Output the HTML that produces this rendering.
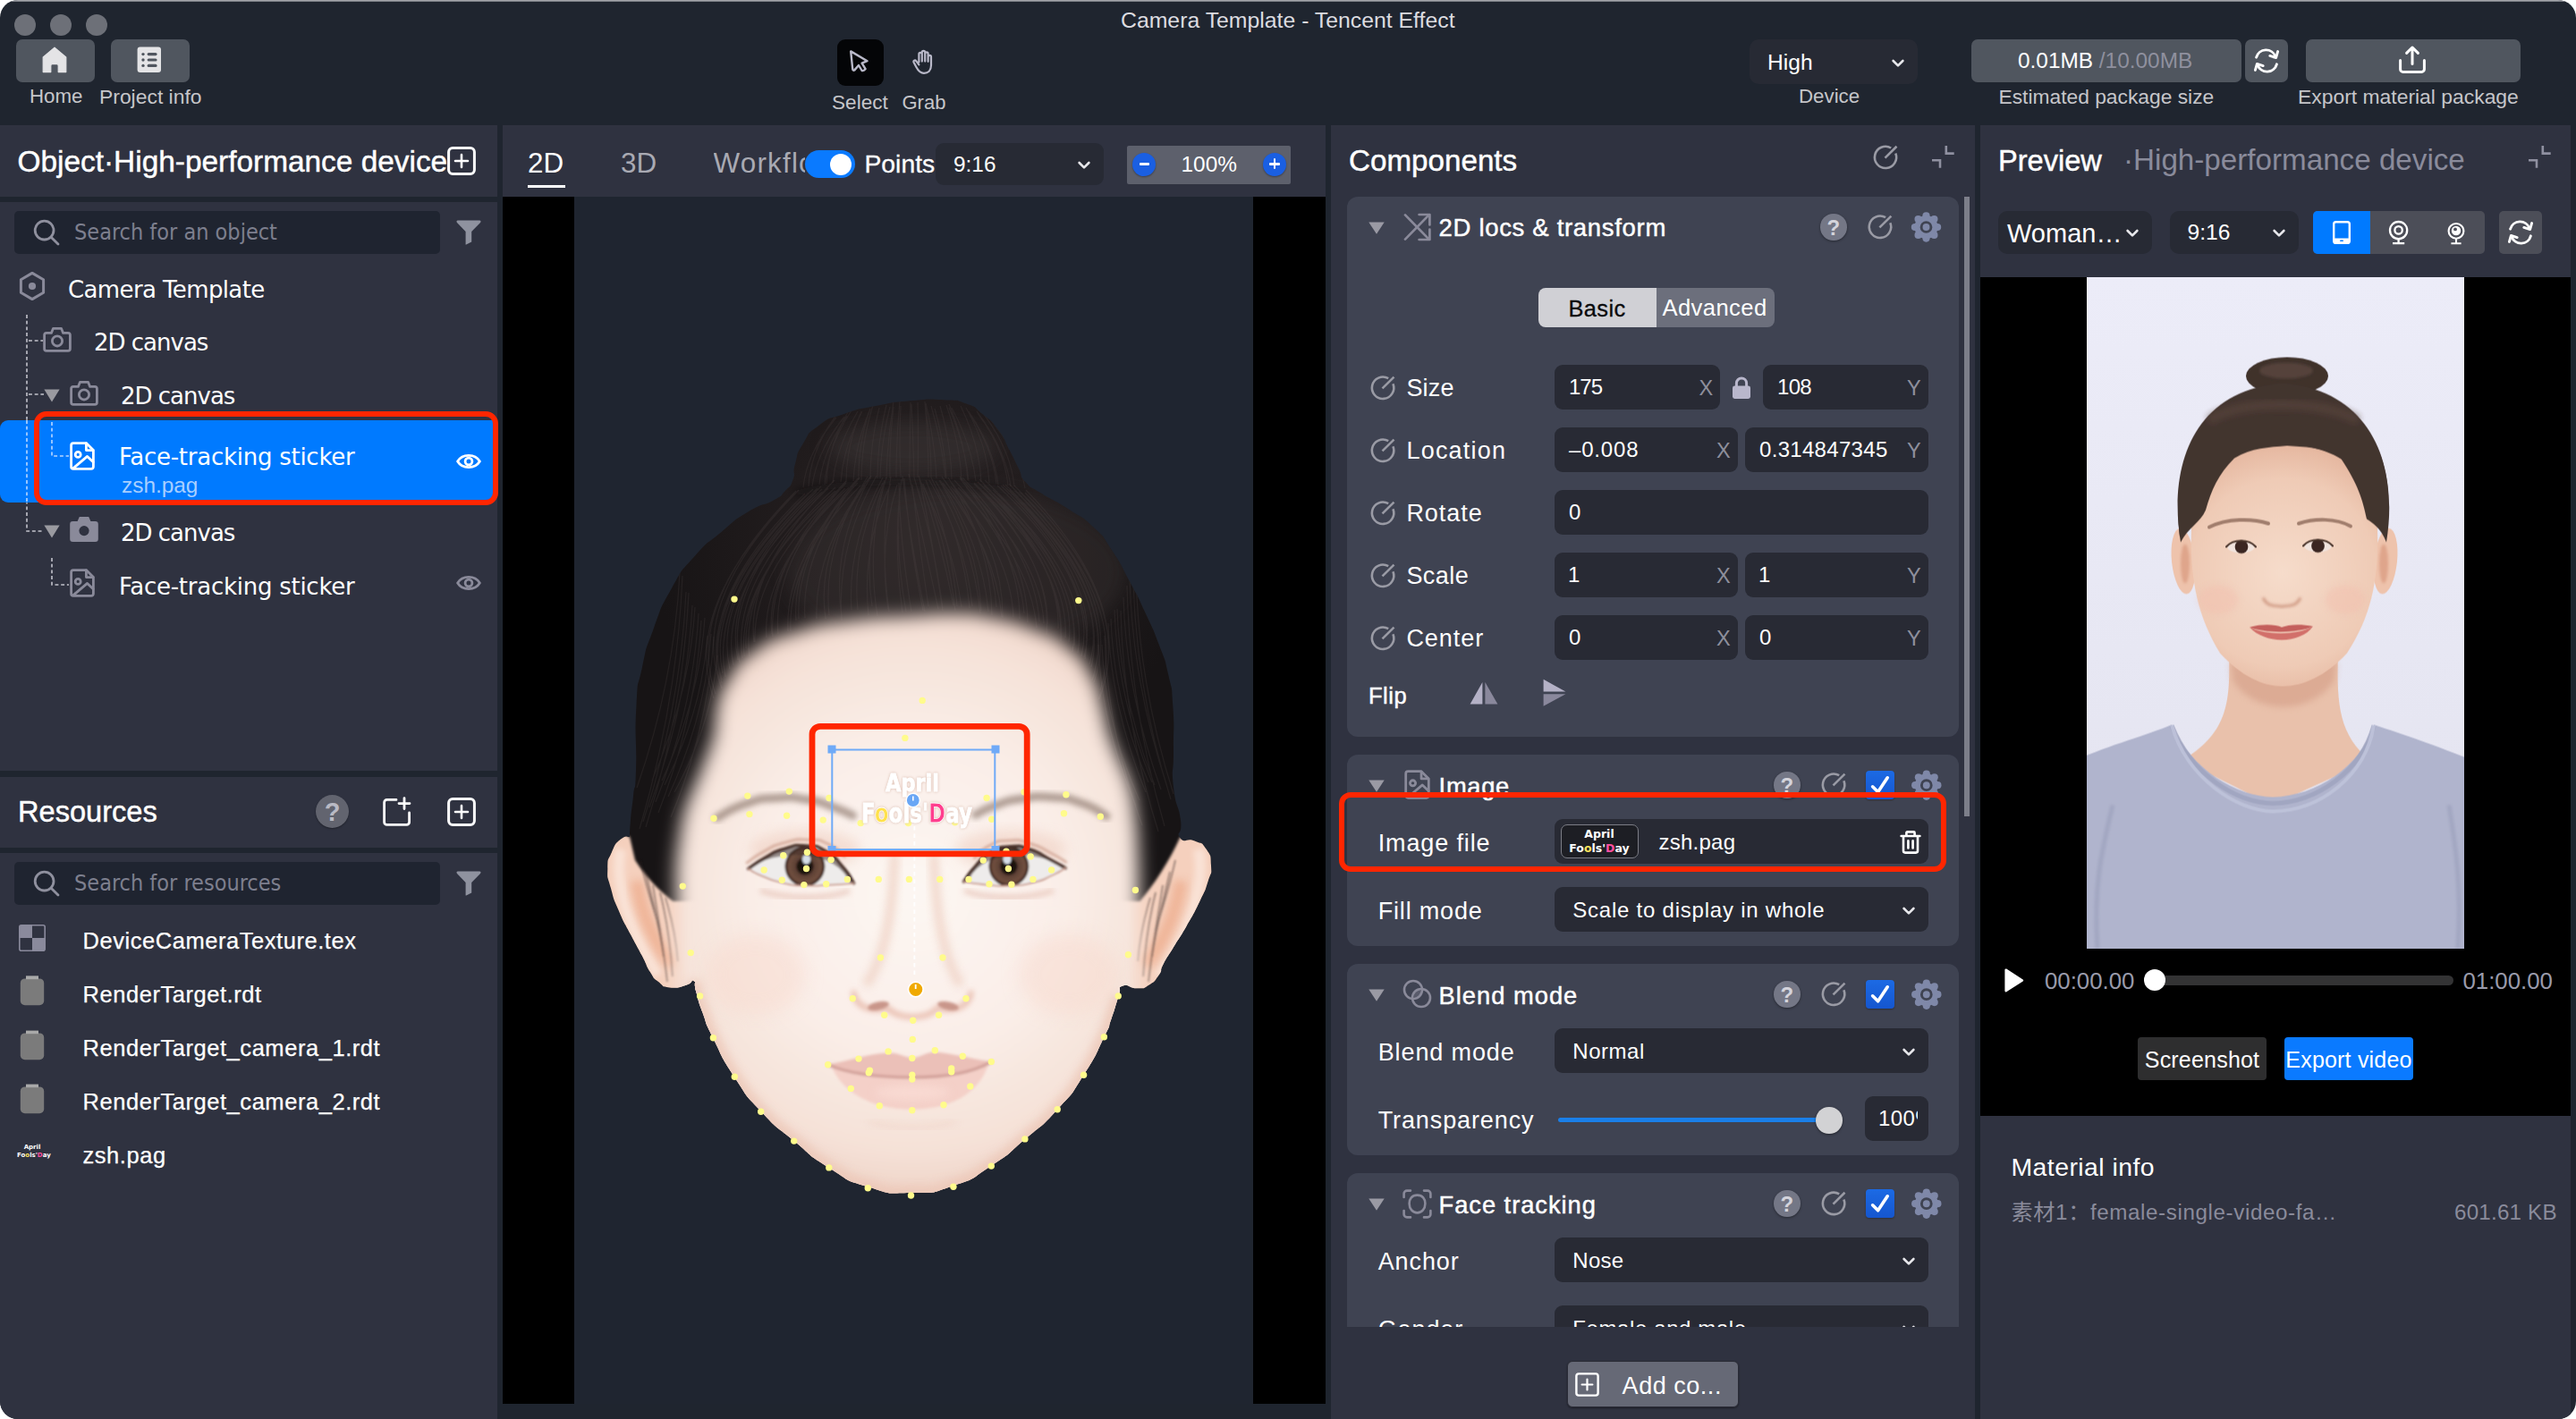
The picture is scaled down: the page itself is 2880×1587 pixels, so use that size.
<!DOCTYPE html>
<html lang="en">
<head>
<meta charset="utf-8">
<title>Camera Template - Tencent Effect</title>
<style>
*{box-sizing:border-box;margin:0;padding:0}
html,body{width:2880px;height:1587px;overflow:hidden;background:#fff}
body{font-family:"Liberation Sans","Noto Sans CJK SC",sans-serif;color:#fff;-webkit-font-smoothing:antialiased}
#win{position:absolute;left:0;top:0;width:2880px;height:1587px;background:#1f252f;border-radius:20px;overflow:hidden}
#win:before{content:"";position:absolute;left:0;top:0;right:0;height:2px;background:linear-gradient(#b4b6ba,#6a6e76);z-index:50}
.a{position:absolute}
.t{position:absolute;white-space:nowrap;line-height:1}
.dv{font-family:"DejaVu Sans","Liberation Sans",sans-serif}
.panel{position:absolute;background:#2f3240}
.card{position:absolute;background:#3f4352;border-radius:12px}
.inp{position:absolute;background:#282a34;border-radius:9px}
.btn{position:absolute;background:#50565f;border-radius:7px}
.lbl{position:absolute;white-space:nowrap;line-height:1;font-size:23px;color:#c6c6ca}
svg{position:absolute;overflow:visible}
.dvc{font-family:"DejaVu Sans Condensed","DejaVu Sans","Liberation Sans",sans-serif;font-stretch:condensed}
.hd{color:#fff;-webkit-text-stroke:0.45px #fff}
.rs{font-size:25.5px;line-height:30px;letter-spacing:0.55px;color:#fff;-webkit-text-stroke:0.25px #fff}
.fool{font-family:"DejaVu Sans","Liberation Sans",sans-serif;color:#fff}
</style>
</head>
<body>
<div id="win">
<!-- ===== title bar / toolbar ===== -->
<div class="a" style="left:16px;top:16px;width:24px;height:24px;border-radius:50%;background:#6d7078"></div>
<div class="a" style="left:56px;top:16px;width:24px;height:24px;border-radius:50%;background:#6d7078"></div>
<div class="a" style="left:96px;top:16px;width:24px;height:24px;border-radius:50%;background:#6d7078"></div>
<div class="t" style="left:1253px;top:9px;font-size:24.8px;color:#dcdce0;line-height:28px">Camera Template - Tencent Effect</div>

<div class="btn" style="left:18px;top:44px;width:88px;height:48px"></div>
<svg style="left:47px;top:52px" width="28" height="30" viewBox="0 0 28 30"><path d="M14 1.2 L26.8 12 V28.6 H18.2 V21.4 a1.8 1.8 0 0 0 -1.8 -1.8 h-4.8 a1.8 1.8 0 0 0 -1.8 1.8 V28.6 H1.2 V12 Z" fill="#e4e4e6" stroke="#e4e4e6" stroke-width="1.2" stroke-linejoin="round"/></svg>
<div class="lbl" style="left:33px;top:94.5px;line-height:26px;font-size:22.3px">Home</div>

<div class="btn" style="left:124px;top:44px;width:88px;height:48px"></div>
<svg style="left:153px;top:52px" width="28" height="30" viewBox="0 0 28 30"><rect x="0.6" y="0.6" width="26.4" height="28.4" rx="3" fill="#e4e4e6"/><g fill="#50565f"><circle cx="7" cy="8.6" r="1.7"/><circle cx="7" cy="15" r="1.7"/><circle cx="7" cy="21.4" r="1.7"/><rect x="11.6" y="7" width="11" height="3.2" rx="1.6"/><rect x="11.6" y="13.4" width="11" height="3.2" rx="1.6"/><rect x="11.6" y="19.8" width="11" height="3.2" rx="1.6"/></g></svg>
<div class="lbl" style="left:111px;top:94.5px;line-height:26px;font-size:22.9px">Project info</div>

<div class="a" style="left:936px;top:44px;width:52px;height:52px;border-radius:9px;background:#040507"></div>
<svg style="left:936px;top:44px" width="52" height="52" viewBox="0 0 52 52"><path d="M15.2 13.4 L33.6 24.2 L27.6 26.6 L31.6 33.2 Q30 35.6 27.6 35 L24 29 L19.4 34.4 Q17.6 35.4 17.2 33 Z" fill="none" stroke="#b9b9c9" stroke-width="2.4" stroke-linejoin="round" stroke-linecap="round"/></svg>
<div class="lbl" style="left:930px;top:102px;line-height:26px;font-size:22.6px">Select</div>
<svg style="left:1018px;top:54px" width="28" height="30" viewBox="0 0 28 30"><g fill="none" stroke="#b9b9c9" stroke-width="2.2" stroke-linecap="round" stroke-linejoin="round"><path d="M9.4 15.4 V6.6 a1.7 1.7 0 0 1 3.4 0 V14.6 M12.8 14.6 V4.6 a1.7 1.7 0 0 1 3.4 0 V14.6 M16.2 14.6 V6 a1.7 1.7 0 0 1 3.4 0 V14.8 M19.6 14.8 V9.6 a1.7 1.7 0 0 1 3.4 0 V19 C23 25 19.4 27.8 15 27.8 C10.6 27.8 8.6 25.2 6.4 21 L3.6 15.8 C2.6 13.8 5 12.6 6.4 14.4 L9.4 18.4"/></g></svg>
<div class="lbl" style="left:1008.5px;top:102px;line-height:26px;font-size:22px">Grab</div>

<div class="a" style="left:1956px;top:44px;width:188px;height:50px;border-radius:10px;background:#272a34"></div>
<div class="t" style="left:1976px;top:56px;font-size:24.6px;line-height:28px;color:#fff">High</div>
<svg style="left:2114px;top:65px" width="16" height="12" viewBox="0 0 16 12"><path d="M2.6 3 L8 8.4 L13.4 3" fill="none" stroke="#e8e8ec" stroke-width="2.6" stroke-linecap="round" stroke-linejoin="round"/></svg>
<div class="lbl" style="left:2011px;top:94.5px;line-height:26px;font-size:22.3px">Device</div>

<div class="btn" style="left:2204px;top:44px;width:302px;height:48px"></div>
<div class="t" style="left:2256px;top:54px;font-size:24.4px;line-height:28px;color:#fff">0.01MB <span style="color:#8f909e">/10.00MB</span></div>
<div class="lbl" style="left:2234.5px;top:94.5px;line-height:26px;font-size:22.8px">Estimated package size</div>
<div class="btn" style="left:2510px;top:44px;width:48px;height:48px"></div>
<svg style="left:2518px;top:52px" width="32" height="32" viewBox="0 0 32 32"><g fill="none" stroke="#fff" stroke-width="2.9" stroke-linecap="round" stroke-linejoin="round"><path d="M4.6 12.2 A11.2 11.2 0 0 1 26 11.4"/><path d="M28.6 5.6 L26.6 12.6 L19.8 10.4"/><path d="M27.4 19.8 A11.2 11.2 0 0 1 6 20.6"/><path d="M3.4 26.4 L5.4 19.4 L12.2 21.6"/></g></svg>
<div class="btn" style="left:2578px;top:44px;width:240px;height:48px"></div>
<svg style="left:2681px;top:50px" width="32" height="34" viewBox="0 0 32 34"><g fill="none" stroke="#fff" stroke-width="3" stroke-linecap="round" stroke-linejoin="round"><path d="M2.6 17.4 V27.4 a3 3 0 0 0 3 3 H26.4 a3 3 0 0 0 3 -3 V17.4"/><path d="M16 21.4 V3.4 M9.6 9.4 L16 3 L22.4 9.4"/></g></svg>
<div class="lbl" style="left:2569px;top:94.5px;line-height:26px;font-size:22.9px">Export material package</div>
<!-- ===== left: object tree ===== -->
<div class="panel" style="left:0;top:140px;width:556px;height:80px"></div>
<div class="t hd" style="left:19.5px;top:162px;font-size:33.4px;line-height:38px">Object·High-performance device</div>
<svg style="left:500px;top:164px" width="32" height="32" viewBox="0 0 32 32"><rect x="1.6" y="1.6" width="28.8" height="28.8" rx="4.5" fill="none" stroke="#fff" stroke-width="3"/><path d="M9 16 H23 M16 9 V23" stroke="#fff" stroke-width="2.6" stroke-linecap="round"/></svg>
<div class="panel" style="left:0;top:226px;width:556px;height:636px"></div>
<div class="a" style="left:16px;top:236px;width:476px;height:48px;border-radius:5px;background:#1f2430"></div>
<svg style="left:36px;top:244px" width="32" height="32" viewBox="0 0 32 32"><circle cx="13.6" cy="13.6" r="10.4" fill="none" stroke="#8f909e" stroke-width="2.8"/><path d="M21.4 21.4 L29 29" stroke="#8f909e" stroke-width="2.8" stroke-linecap="round"/></svg>
<div class="t dvc" style="left:83px;top:244px;font-size:25px;line-height:32px;color:#7d7f8e">Search for an object</div>
<svg style="left:510px;top:246px" width="28" height="28" viewBox="0 0 28 28"><path d="M1.6 0.6 H26.4 Q28.4 1.2 27 3 L17.2 13 V24.4 L11.2 27.6 Q10.4 27.8 10.6 26.6 V13 L1 3 Q-0.4 1.2 1.6 0.6 Z" fill="#8f929f"/></svg>

<!-- tree lines -->
<svg style="left:0;top:340px" width="120" height="340" viewBox="0 340 120 340"><g fill="none" stroke="#c4c4cc" stroke-width="1.6" stroke-dasharray="3.9 2.8">
<path d="M30 352 V594 H49"/><path d="M32 381 H48"/><path d="M32 441 H49"/>
<path d="M58 472 V510 H77"/><path d="M58 624 V654 H77"/></g></svg>

<!-- row: Camera Template -->
<svg style="left:20px;top:303px" width="32" height="34" viewBox="0 0 32 34"><path d="M16 2.4 L28.6 9.7 V24.3 L16 31.6 L3.4 24.3 V9.7 Z" fill="none" stroke="#8a8a9a" stroke-width="3" stroke-linejoin="round"/><circle cx="16" cy="17" r="4.1" fill="#8a8a9a"/></svg>
<div class="t dv" style="left:76px;top:306px;font-size:26px;line-height:36px;letter-spacing:-0.62px">Camera Template</div>
<!-- row: 2D canvas -->
<svg style="left:48px;top:365px" width="32" height="30" viewBox="0 0 32 30"><g fill="none" stroke="#8a8a9a" stroke-width="2.8" stroke-linejoin="round"><path d="M4 7.4 H9.4 L11.4 2.4 H20.6 L22.6 7.4 H28 a2.4 2.4 0 0 1 2.4 2.4 V25 a2.4 2.4 0 0 1 -2.4 2.4 H4 a2.4 2.4 0 0 1 -2.4 -2.4 V9.8 A2.4 2.4 0 0 1 4 7.4 Z"/><circle cx="16" cy="16.4" r="5.6"/></g></svg>
<div class="t dv" style="left:105px;top:365px;font-size:26px;line-height:36px;letter-spacing:-1px">2D canvas</div>
<!-- row: 2D canvas (open) -->
<svg style="left:49px;top:435px" width="18" height="15" viewBox="0 0 18 15"><path d="M0.4 0.6 H17.6 L9 14.6 Z" fill="#9a9aa0"/></svg>
<svg style="left:78px;top:425px" width="32" height="30" viewBox="0 0 32 30"><g fill="none" stroke="#8a8a9a" stroke-width="2.8" stroke-linejoin="round"><path d="M4 7.4 H9.4 L11.4 2.4 H20.6 L22.6 7.4 H28 a2.4 2.4 0 0 1 2.4 2.4 V25 a2.4 2.4 0 0 1 -2.4 2.4 H4 a2.4 2.4 0 0 1 -2.4 -2.4 V9.8 A2.4 2.4 0 0 1 4 7.4 Z"/><circle cx="16" cy="16.4" r="5.6"/></g></svg>
<div class="t dv" style="left:135px;top:425px;font-size:26px;line-height:36px;letter-spacing:-1px">2D canvas</div>
<!-- row: selected -->
<div class="a" style="left:0;top:470px;width:552px;height:92px;background:#007aff;border-radius:9px 0 0 9px"></div>
<svg style="left:0;top:465px" width="120" height="100" viewBox="0 465 120 100"><g fill="none" stroke="#b9d8ff" stroke-width="1.6" stroke-dasharray="3.9 2.8"><path d="M30 470 V562"/><path d="M58 472 V510 H77"/></g></svg>
<svg style="left:78px;top:494px" width="28" height="32" viewBox="0 0 28 32"><g fill="none" stroke="#fff" stroke-width="2.8" stroke-linejoin="round" stroke-linecap="round"><path d="M4 1.6 H18.4 L26.4 9.6 V28 a2.4 2.4 0 0 1 -2.4 2.4 H4 a2.4 2.4 0 0 1 -2.4 -2.4 V4 A2.4 2.4 0 0 1 4 1.6 Z"/><path d="M18.4 2 V9.6 H26"/><circle cx="9.2" cy="14.4" r="3"/><path d="M4 29.6 L19.6 16.4 L26.2 22.8"/></g></svg>
<div class="t dv" style="left:133px;top:493px;font-size:26px;line-height:36px;letter-spacing:-0.26px">Face-tracking sticker</div>
<div class="t" style="left:136px;top:529px;font-size:24.4px;line-height:28px;color:#a8cfff">zsh.pag</div>
<svg style="left:510px;top:505px" width="28" height="22" viewBox="0 0 28 22"><g fill="none" stroke="#fff" stroke-width="2.8" stroke-linejoin="round"><path d="M1.6 11 C7 2.2 21 2.2 26.4 11 C21 19.8 7 19.8 1.6 11 Z"/><circle cx="14" cy="11" r="3.9"/></g></svg>
<div class="a" style="left:37.5px;top:459.5px;width:519.5px;height:105.5px;border:6.6px solid #ff2600;border-radius:14px"></div>
<!-- row: 2D canvas (filled cam) -->
<svg style="left:49px;top:587px" width="18" height="15" viewBox="0 0 18 15"><path d="M0.4 0.6 H17.6 L9 14.6 Z" fill="#9a9aa0"/></svg>
<svg style="left:78px;top:577px" width="32" height="30" viewBox="0 0 32 30"><path d="M3.4 6 H8.6 L10.8 1 H21.2 L23.4 6 H28.6 a3.2 3.2 0 0 1 3.2 3.2 V25.8 a3.2 3.2 0 0 1 -3.2 3.2 H3.4 a3.2 3.2 0 0 1 -3.2 -3.2 V9.2 A3.2 3.2 0 0 1 3.4 6 Z" fill="#8a8a9a"/><circle cx="16" cy="16.6" r="5.6" fill="#2f3240"/></svg>
<div class="t dv" style="left:135px;top:578px;font-size:26px;line-height:36px;letter-spacing:-1px">2D canvas</div>
<!-- row: sticker 2 -->
<svg style="left:78px;top:636px" width="28" height="32" viewBox="0 0 28 32"><g fill="none" stroke="#8a8a9a" stroke-width="2.8" stroke-linejoin="round" stroke-linecap="round"><path d="M4 1.6 H18.4 L26.4 9.6 V28 a2.4 2.4 0 0 1 -2.4 2.4 H4 a2.4 2.4 0 0 1 -2.4 -2.4 V4 A2.4 2.4 0 0 1 4 1.6 Z"/><path d="M18.4 2 V9.6 H26"/><circle cx="9.2" cy="14.4" r="3"/><path d="M4 29.6 L19.6 16.4 L26.2 22.8"/></g></svg>
<div class="t dv" style="left:133px;top:638px;font-size:26px;line-height:36px;letter-spacing:-0.26px">Face-tracking sticker</div>
<svg style="left:510px;top:641px" width="28" height="22" viewBox="0 0 28 22"><g fill="none" stroke="#8a8a9a" stroke-width="2.8" stroke-linejoin="round"><path d="M1.6 11 C7 2.2 21 2.2 26.4 11 C21 19.8 7 19.8 1.6 11 Z"/><circle cx="14" cy="11" r="3.9"/></g></svg>
<!-- ===== left: resources ===== -->
<div class="panel" style="left:0;top:868.5px;width:556px;height:79px"></div>
<div class="t hd" style="left:20px;top:889px;font-size:32.6px;line-height:38px">Resources</div>
<div class="a" style="left:353px;top:889px;width:37px;height:37px;border-radius:50%;background:#62646f;box-shadow:0 1px 2px rgba(0,0,0,.35)"></div>
<div class="t" style="left:353px;top:890px;width:37px;text-align:center;font-size:29px;line-height:37px;color:#b9bac4;font-weight:bold">?</div>
<svg style="left:427px;top:891px" width="34" height="34" viewBox="0 0 34 34"><g fill="none" stroke="#fff" stroke-width="2.8" stroke-linecap="round" stroke-linejoin="round"><path d="M16 3.4 H5.6 a3 3 0 0 0 -3 3 V28.4 a3 3 0 0 0 3 3 H27.6 a3 3 0 0 0 3 -3 V18"/><path d="M25 1.6 V13.6 M19 7.6 H31"/></g></svg>
<svg style="left:500px;top:892px" width="32" height="32" viewBox="0 0 32 32"><rect x="1.6" y="1.6" width="28.8" height="28.8" rx="4.5" fill="none" stroke="#fff" stroke-width="3"/><path d="M9 16 H23 M16 9 V23" stroke="#fff" stroke-width="2.6" stroke-linecap="round"/></svg>
<div class="panel" style="left:0;top:954px;width:556px;height:640px"></div>
<div class="a" style="left:16px;top:964px;width:476px;height:48px;border-radius:5px;background:#1f2430"></div>
<svg style="left:36px;top:972px" width="32" height="32" viewBox="0 0 32 32"><circle cx="13.6" cy="13.6" r="10.4" fill="none" stroke="#8f909e" stroke-width="2.8"/><path d="M21.4 21.4 L29 29" stroke="#8f909e" stroke-width="2.8" stroke-linecap="round"/></svg>
<div class="t dvc" style="left:83px;top:972px;font-size:25px;line-height:32px;color:#7d7f8e">Search for resources</div>
<svg style="left:510px;top:974px" width="28" height="28" viewBox="0 0 28 28"><path d="M1.6 0.6 H26.4 Q28.4 1.2 27 3 L17.2 13 V24.4 L11.2 27.6 Q10.4 27.8 10.6 26.6 V13 L1 3 Q-0.4 1.2 1.6 0.6 Z" fill="#8f929f"/></svg>

<svg style="left:21px;top:1033.5px" width="30" height="30" viewBox="0 0 30 30"><rect x="0.8" y="0.8" width="28.4" height="28.4" rx="2" fill="none" stroke="#8a8a9c" stroke-width="1.6"/><rect x="1" y="1" width="14" height="14" fill="#8a8a9c"/><rect x="15" y="15" width="14" height="14" fill="#8a8a9c"/></svg>
<div class="t rs" style="left:92.5px;top:1036.7px">DeviceCameraTexture.tex</div>
<svg style="left:22px;top:1091px" width="28" height="34" viewBox="0 0 28 34"><rect x="7" y="0.6" width="14" height="5" fill="#a9a9a9"/><rect x="0.8" y="3.4" width="26.4" height="29.8" rx="5" fill="#7b7b7b"/><rect x="7" y="0.6" width="14" height="3.6" fill="#a9a9a9"/></svg>
<div class="t rs" style="left:92.5px;top:1096.7px">RenderTarget.rdt</div>
<svg style="left:22px;top:1151.5px" width="28" height="34" viewBox="0 0 28 34"><rect x="0.8" y="3.4" width="26.4" height="29.8" rx="5" fill="#7b7b7b"/><rect x="7" y="0.6" width="14" height="3.6" fill="#a9a9a9"/></svg>
<div class="t rs" style="left:92.5px;top:1157.0px">RenderTarget_camera_1.rdt</div>
<svg style="left:22px;top:1211.5px" width="28" height="34" viewBox="0 0 28 34"><rect x="0.8" y="3.4" width="26.4" height="29.8" rx="5" fill="#7b7b7b"/><rect x="7" y="0.6" width="14" height="3.6" fill="#a9a9a9"/></svg>
<div class="t rs" style="left:92.5px;top:1217.2px">RenderTarget_camera_2.rdt</div>
<div class="t fool" style="left:19px;top:1279px;width:34px;text-align:center;font-size:7px;line-height:8.5px;font-weight:bold;white-space:normal">April<br>Fo<span style="color:#ffe45c">o</span>ls'<span style="color:#ff4fa0">D</span>ay</div>
<div class="t rs" style="left:92.5px;top:1277.4px">zsh.pag</div>
<!-- ===== center: viewport header ===== -->
<div class="panel" style="left:562px;top:140px;width:920px;height:80px"></div>
<div class="t" style="left:590px;top:164.6px;font-size:31.4px;line-height:36px;color:#fff">2D</div>
<div class="a" style="left:590px;top:207.4px;width:42px;height:2.8px;background:#fff"></div>
<div class="t" style="left:694px;top:164.6px;font-size:31.4px;line-height:36px;color:#a9aab3">3D</div>
<div class="t" style="left:797.5px;top:164.6px;font-size:31.4px;line-height:36px;color:#a9aab3;width:102.5px;overflow:hidden;letter-spacing:1.2px">Workflow</div>
<div class="a" style="left:900px;top:168px;width:56px;height:31px;border-radius:16px;background:#0a7aff"></div>
<div class="a" style="left:928px;top:171.5px;width:24px;height:24px;border-radius:50%;background:#fff"></div>
<div class="t hd" style="left:966.5px;top:166px;font-size:28.3px;line-height:34px;-webkit-text-stroke:0.3px #fff">Points</div>
<div class="a" style="left:1046px;top:160px;width:188px;height:47px;border-radius:9px;background:#272a34"></div>
<div class="t" style="left:1066px;top:170px;font-size:24.4px;line-height:28px;color:#fff">9:16</div>
<svg style="left:1204px;top:179px" width="16" height="12" viewBox="0 0 16 12"><path d="M2.6 3 L8 8.4 L13.4 3" fill="none" stroke="#e8e8ec" stroke-width="2.6" stroke-linecap="round" stroke-linejoin="round"/></svg>
<div class="a" style="left:1260px;top:162.5px;width:183px;height:43.5px;background:#5d606c;border-radius:2px"></div>
<div class="a" style="left:1266px;top:170.5px;width:26px;height:26px;border-radius:50%;background:#1a5fe2;box-shadow:0 1px 2px rgba(0,0,0,.35)"></div>
<div class="a" style="left:1273.5px;top:181.8px;width:11px;height:2.8px;background:#fff;border-radius:1px"></div>
<div class="t" style="left:1320.5px;top:170px;font-size:24.4px;line-height:28px;color:#fff">100%</div>
<div class="a" style="left:1412px;top:170.5px;width:26px;height:26px;border-radius:50%;background:#1a5fe2;box-shadow:0 1px 2px rgba(0,0,0,.35)"></div>
<div class="a" style="left:1419px;top:181.8px;width:12px;height:2.8px;background:#fff;border-radius:1px"></div>
<div class="a" style="left:1423.6px;top:177.2px;width:2.8px;height:12px;background:#fff;border-radius:1px"></div>
<!-- viewport -->
<div class="a" style="left:562px;top:220px;width:920px;height:1350px;background:#000"></div>
<div class="a" style="left:642px;top:220px;width:759px;height:1350px;background:#1f2530"></div>
<!-- ===== center: face model (generated) ===== -->
<svg style="left:642px;top:220px" width="759" height="1350" viewBox="642 220 759 1350">
<defs>
<clipPath id="sil"><path d="M704.0 935.9 C704.3 929.6 703.7 932.3 705.0 917.0 C706.3 901.7 706.0 909.0 708.0 890.0 C710.0 871.0 709.9 893.3 711.0 860.0 C712.1 826.7 709.1 827.7 711.4 790.0 C713.7 752.3 711.5 775.7 717.8 747.0 C724.1 718.3 719.4 733.6 730.4 704.0 C741.4 674.4 735.5 685.4 750.7 658.3 C765.9 631.2 757.4 643.9 776.0 622.8 C794.6 601.7 786.2 611.8 806.5 594.9 C826.8 578.0 817.5 583.8 837.0 572.0 C856.5 560.2 851.4 567.0 864.9 559.4 C878.4 551.8 870.4 556.8 877.6 549.2 C884.8 541.6 882.7 546.6 886.5 536.5 C890.3 526.4 885.2 532.3 889.0 518.8 C892.8 505.3 889.0 510.4 897.9 496.0 C906.8 481.6 900.4 486.7 915.6 475.7 C930.8 464.7 922.4 470.2 943.5 463.0 C964.6 455.8 954.5 459.0 979.0 454.1 C1003.5 449.2 991.7 450.6 1017.1 448.3 C1042.5 446.0 1034.1 446.1 1055.2 447.2 C1076.3 448.3 1066.1 446.3 1080.5 451.6 C1094.9 456.9 1086.5 453.3 1098.3 463.0 C1110.1 472.7 1105.9 467.2 1116.0 480.7 C1126.1 494.2 1121.1 489.2 1128.7 503.6 C1136.3 518.0 1133.0 512.1 1138.9 523.9 C1144.8 535.7 1138.1 529.8 1146.5 539.1 C1154.9 548.4 1148.1 541.7 1164.2 551.8 C1180.3 561.9 1175.2 556.8 1194.7 569.5 C1214.2 582.2 1206.5 574.6 1222.6 589.8 C1238.7 605.0 1229.4 594.9 1242.9 615.2 C1256.4 635.5 1250.5 627.0 1263.2 650.7 C1275.9 674.4 1269.9 662.5 1280.9 686.2 C1291.9 709.9 1287.6 698.9 1296.1 721.7 C1304.6 744.5 1301.2 731.9 1306.3 754.7 C1311.4 777.5 1309.5 761.6 1311.4 790.0 C1313.3 818.4 1311.8 810.0 1312.0 840.0 C1312.2 870.0 1309.3 854.3 1312.0 880.0 C1314.7 905.7 1317.6 898.1 1320.0 917.0 C1322.4 935.9 1314.0 929.0 1319.2 936.8 C1324.4 944.6 1325.9 936.2 1335.7 940.5 C1345.5 944.8 1342.4 940.4 1348.5 949.6 C1354.6 958.8 1353.4 955.8 1354.0 968.0 C1354.6 980.2 1354.7 972.8 1350.4 986.2 C1346.1 999.6 1349.2 991.7 1341.2 1008.2 C1333.2 1024.7 1336.3 1018.6 1326.5 1035.7 C1316.7 1052.8 1320.4 1045.5 1311.9 1059.5 C1303.4 1073.5 1306.4 1067.4 1300.9 1077.8 C1295.4 1088.2 1300.9 1082.7 1295.4 1090.7 C1289.9 1098.7 1292.3 1096.8 1284.4 1101.7 C1276.5 1106.6 1281.4 1105.0 1271.6 1105.3 C1261.8 1105.6 1262.1 1099.5 1255.1 1102.6 C1248.1 1105.7 1254.8 1102.0 1250.5 1114.5 C1246.2 1127.0 1247.7 1124.9 1242.3 1140.0 C1236.9 1155.1 1244.6 1139.1 1234.4 1159.8 C1224.2 1180.5 1229.0 1175.2 1211.6 1202.2 C1194.2 1229.2 1204.1 1216.8 1182.2 1240.7 C1160.3 1264.6 1170.6 1253.0 1146.0 1274.0 C1121.4 1295.0 1135.0 1286.4 1108.3 1303.7 C1081.6 1321.0 1095.9 1315.9 1066.0 1326.0 C1036.1 1336.1 1050.4 1333.6 1018.5 1334.0 C986.6 1334.4 1000.9 1336.6 970.3 1327.2 C939.7 1317.8 954.3 1323.0 926.8 1305.9 C899.3 1288.8 913.1 1297.0 887.7 1276.0 C862.3 1255.0 872.8 1266.5 850.7 1242.8 C828.6 1219.1 839.1 1232.0 821.3 1204.8 C803.5 1177.6 809.3 1185.3 797.4 1161.3 C785.5 1137.3 792.0 1150.2 785.6 1132.8 C779.2 1115.4 781.6 1120.9 778.2 1109.0 C774.8 1097.1 779.2 1099.4 775.5 1097.0 C771.8 1094.6 776.1 1099.2 767.2 1101.7 C758.3 1104.2 759.3 1105.6 748.9 1104.4 C738.5 1103.2 743.4 1103.8 736.1 1098.0 C728.8 1092.2 733.0 1096.8 726.9 1087.0 C720.8 1077.2 725.1 1082.7 717.8 1068.7 C710.5 1054.7 713.6 1061.4 705.0 1044.9 C696.4 1028.4 699.4 1036.3 692.1 1019.2 C684.8 1002.1 687.3 1009.5 683.0 993.6 C678.7 977.7 679.0 985.0 679.3 971.6 C679.6 958.2 679.0 964.3 683.9 953.3 C688.8 942.3 687.3 944.4 694.0 938.6 C700.7 932.8 700.7 936.8 704.0 935.9 C707.3 935.0 703.7 942.2 704.0 935.9 Z"/></clipPath>
<clipPath id="lec"><path d="M836.7 971.6 C843.3 967.4 843.0 966.2 856.4 958.8 C869.7 951.4 862.1 953.7 876.9 949.4 C891.7 945.1 885.4 945.1 900.8 946.0 C916.1 946.9 909.3 944.3 923.0 952.0 C936.6 959.7 931.2 957.1 941.8 969.1 C952.3 981.0 950.3 981.6 954.6 987.8 C945.7 988.4 945.5 988.7 928.1 989.6 C910.7 990.4 919.6 991.0 902.5 990.4 C885.4 989.8 893.9 991.5 876.9 987.8 C859.8 984.1 864.6 984.7 851.2 979.3 C837.9 973.9 841.6 974.2 836.7 971.6 Z"/></clipPath>
<clipPath id="rec"><path d="M1191.1 970.8 C1184.9 967.4 1185.4 967.4 1172.3 960.5 C1159.2 953.7 1166.1 954.8 1151.8 950.3 C1137.6 945.7 1144.4 945.7 1129.6 946.9 C1114.8 948.0 1120.5 946.3 1107.4 953.7 C1094.3 961.1 1100.3 958.2 1090.4 969.1 C1080.4 979.9 1081.8 980.4 1077.5 986.1 C1086.4 987.3 1086.6 988.1 1104.0 989.6 C1121.4 991.0 1112.6 991.3 1129.6 990.4 C1146.7 989.6 1139.9 990.7 1155.3 987.0 C1170.6 983.3 1163.8 984.7 1175.7 979.3 C1187.7 973.9 1186.0 973.6 1191.1 970.8 Z"/></clipPath>
<filter id="b10" x="-20%" y="-20%" width="140%" height="140%"><feGaussianBlur stdDeviation="10"/></filter>
<filter id="b8" x="-20%" y="-20%" width="140%" height="140%"><feGaussianBlur stdDeviation="7"/></filter>
<filter id="b6" x="-30%" y="-30%" width="160%" height="160%"><feGaussianBlur stdDeviation="5"/></filter>
<filter id="b3" x="-30%" y="-30%" width="160%" height="160%"><feGaussianBlur stdDeviation="3"/></filter>
<filter id="b2" x="-30%" y="-30%" width="160%" height="160%"><feGaussianBlur stdDeviation="1.6"/></filter>
<filter id="b1" x="-30%" y="-30%" width="160%" height="160%"><feGaussianBlur stdDeviation="0.8"/></filter>
<radialGradient id="skg" cx="1020" cy="1000" r="340" gradientUnits="userSpaceOnUse"><stop offset="0" stop-color="#fdf7f3"/><stop offset="0.5" stop-color="#faeee8"/><stop offset="0.85" stop-color="#f5e1d7"/><stop offset="1" stop-color="#efd3c6"/></radialGradient>
<radialGradient id="hrg" cx="1030" cy="600" r="300" gradientUnits="userSpaceOnUse"><stop offset="0" stop-color="#2c2627"/><stop offset="0.5" stop-color="#211c1d"/><stop offset="1" stop-color="#171415"/></radialGradient>
<radialGradient id="iris" cx="0.5" cy="0.5" r="0.5"><stop offset="0" stop-color="#150d0b"/><stop offset="0.38" stop-color="#1f1411"/><stop offset="0.46" stop-color="#5c3f34"/><stop offset="0.8" stop-color="#71503f"/><stop offset="0.92" stop-color="#4a3028"/><stop offset="1" stop-color="#33211c"/></radialGradient>
<linearGradient id="earg" x1="0" y1="0" x2="1" y2="0"><stop offset="0" stop-color="#f8dccd"/><stop offset="0.35" stop-color="#f1bfa4"/><stop offset="0.7" stop-color="#eeb092"/><stop offset="1" stop-color="#f3c9b6"/></linearGradient>
<linearGradient id="eargr" x1="1" y1="0" x2="0" y2="0"><stop offset="0" stop-color="#f8dccd"/><stop offset="0.35" stop-color="#f1bfa4"/><stop offset="0.7" stop-color="#eeb092"/><stop offset="1" stop-color="#f3c9b6"/></linearGradient>
</defs>
<g clip-path="url(#sil)">
<rect x="642" y="420" width="759" height="950" fill="url(#hrg)"/>
<!-- hair shading -->
<path d="M890 552 C940 536 1090 532 1146 556" fill="none" stroke="#0e0c0d" stroke-width="8" filter="url(#b6)" opacity="0.45"/>
<ellipse cx="1070" cy="640" rx="190" ry="95" fill="#383133" opacity="0.45" filter="url(#b10)"/>
<ellipse cx="1020" cy="500" rx="95" ry="28" fill="#3a3435" opacity="0.6" filter="url(#b10)"/>
<path d="M798 781 Q761 680 889 552 M800 776 Q764 677 890 549 M807 770 Q768 674 893 548 M807 769 Q775 675 902 554 M807 760 Q779 670 900 552 M807 764 Q781 669 904 551 M808 753 Q788 664 909 547 M811 757 Q792 661 914 546 M816 748 Q795 661 913 550 M820 744 Q802 658 919 550 M825 738 Q806 652 918 544 M827 741 Q808 652 919 547 M830 736 Q817 649 926 546 M832 734 Q823 649 934 549 M838 734 Q826 645 934 545 M834 725 Q830 642 934 545 M843 718 Q833 637 933 537 M844 718 Q841 639 939 547 M857 713 Q851 636 949 545 M863 709 Q854 635 945 546 M864 712 Q858 629 946 538 M870 709 Q863 628 946 540 M881 706 Q877 626 959 540 M884 706 Q880 627 962 543 M890 694 Q885 620 959 535 M893 692 Q889 619 959 535 M900 691 Q895 618 961 534 M913 692 Q910 616 972 534 M923 692 Q912 619 967 543 M927 688 Q919 613 970 533 M941 689 Q929 611 974 532 M941 694 Q935 610 980 532 M952 682 Q947 610 987 534 M959 682 Q952 612 987 540 M971 688 Q963 611 996 541 M975 678 Q965 609 989 537 M981 689 Q968 607 991 534 M993 681 Q982 610 1003 542 M994 684 Q983 605 996 533 M1009 685 Q998 605 1008 536 M1013 684 Q999 607 1007 541 M1019 684 Q1006 606 1005 540 M1032 683 Q1016 603 1011 535 M1034 684 Q1017 601 1009 532 M1038 678 Q1027 605 1020 542 M1049 681 Q1031 599 1016 530 M1054 683 Q1042 602 1028 535 M1054 680 Q1043 601 1022 534 M1066 677 Q1051 600 1027 532 M1068 683 Q1059 606 1032 541 M1070 678 Q1064 604 1035 537 M1075 679 Q1065 606 1030 540 M1084 680 Q1077 604 1041 534 M1087 678 Q1080 607 1039 537 M1096 686 Q1088 607 1046 538 M1097 683 Q1093 608 1050 537 M1105 684 Q1098 608 1051 537 M1109 688 Q1108 608 1060 534 M1114 679 Q1110 609 1053 533 M1120 690 Q1113 613 1054 540 M1121 691 Q1122 614 1064 540 M1133 690 Q1130 618 1063 544 M1140 692 Q1140 615 1073 535 M1145 686 Q1140 617 1067 537 M1149 696 Q1148 616 1073 533 M1159 702 Q1152 624 1071 545 M1162 695 Q1157 619 1076 534 M1167 697 Q1164 626 1080 545 M1171 698 Q1173 626 1089 541 M1170 710 Q1177 627 1089 540 M1183 703 Q1186 628 1095 536 M1186 717 Q1190 631 1094 540 M1186 708 Q1191 634 1091 542 M1191 713 Q1196 633 1093 539 M1195 718 Q1205 639 1100 543 M1201 722 Q1207 637 1101 537 M1199 729 Q1213 645 1107 549 M1205 730 Q1219 647 1110 548 M1213 737 Q1228 648 1119 543 M1209 734 Q1229 650 1115 543 M1212 735 Q1234 651 1121 542 M1218 743 Q1243 657 1127 548 M1220 746 Q1242 656 1124 542 M1221 761 Q1252 663 1134 548 M1223 757 Q1250 661 1128 541 M1222 759 Q1254 667 1129 548 M1223 763 Q1258 666 1134 543 M1230 772 Q1263 672 1139 549 M1229 782 Q1271 675 1147 548 M1228 782 Q1272 678 1146 551" fill="none" stroke="#5a4e50" stroke-width="1.3" opacity="0.2"/>
<path d="M898 545 Q902 506 935 467 M904 544 Q906 504 935 464 M908 544 Q913 505 944 466 M916 542 Q920 504 947 465 M922 542 Q925 500 952 459 M924 541 Q925 500 949 459 M931 540 Q935 500 959 460 M940 539 Q943 499 964 460 M946 539 Q946 499 963 460 M954 538 Q956 497 973 457 M960 537 Q959 497 973 457 M963 537 Q963 495 976 453 M973 536 Q973 496 983 456 M981 535 Q981 494 991 453 M984 535 Q985 495 995 455 M991 535 Q992 492 999 449 M995 535 Q994 495 999 455 M1002 534 Q1002 491 1006 448 M1007 534 Q1005 494 1007 454 M1017 534 Q1017 492 1018 450 M1022 534 Q1021 493 1019 452 M1026 534 Q1027 492 1026 450 M1038 534 Q1038 491 1034 449 M1041 534 Q1041 495 1035 456 M1047 535 Q1045 493 1035 451 M1057 535 Q1053 495 1041 454 M1058 535 Q1056 496 1045 457 M1064 536 Q1063 495 1051 454 M1075 537 Q1073 495 1058 453 M1082 537 Q1079 495 1061 452 M1083 538 Q1079 497 1061 456 M1091 538 Q1086 497 1064 456 M1097 539 Q1095 497 1074 454 M1106 540 Q1104 498 1080 456 M1114 541 Q1110 503 1085 464 M1116 542 Q1111 501 1083 460 M1127 543 Q1123 502 1093 462 M1130 544 Q1124 502 1092 460 M1134 544 Q1130 503 1099 462 M1146 546 Q1139 505 1103 464" fill="none" stroke="#564b4d" stroke-width="1.3" opacity="0.2"/>
<path d="M760 640 Q754 761 712 881 M763 644 Q757 786 715 927 M767 662 Q761 790 719 919 M770 663 Q764 794 722 925 M774 677 Q768 790 726 903 M777 679 Q771 776 729 873 M781 686 Q775 792 733 897 M784 694 Q778 801 736 909 M788 691 Q782 782 740 873 M791 711 Q785 794 743 878 M795 709 Q789 800 747 891 M798 712 Q792 813 750 914 M802 733 Q796 809 754 886 M1270 643 Q1273 766 1312 888 M1267 648 Q1270 771 1309 894 M1263 647 Q1266 763 1305 880 M1260 655 Q1263 790 1302 924 M1256 668 Q1259 775 1298 883 M1253 683 Q1256 806 1295 930 M1249 681 Q1252 779 1291 878 M1246 682 Q1249 779 1288 875 M1242 692 Q1245 784 1284 875 M1239 697 Q1242 791 1281 886 M1235 711 Q1238 817 1277 923 M1232 721 Q1235 808 1274 895 M1228 721 Q1231 811 1270 901" fill="none" stroke="#4c4244" stroke-width="1.3" opacity="0.25"/>
<!-- ears -->
<g filter="url(#b2)"><path d="M704 936 L690 930 L660 960 L670 1030 L730 1110 L790 1110 L790 1008 L752.6 1008 C738 997 723 982 710 962 Z" fill="#f5d0bd"/><path d="M1319.2 936.8 L1335 930 L1365 960 L1358 1030 L1298 1112 L1240 1112 L1240 1008 L1274.3 1008 C1290 990 1308 962 1319.2 936.8 Z" fill="#f5d0bd"/></g>
<path d="M694 950 C686 990 704 1040 736 1090" fill="none" stroke="#f9e2d6" stroke-width="12" filter="url(#b3)"/>
<path d="M1340 950 C1348 990 1330 1040 1296 1092" fill="none" stroke="#f9e2d6" stroke-width="12" filter="url(#b3)"/>
<path d="M712 985 C716 1020 732 1055 752 1080" fill="none" stroke="#eda988" stroke-width="14" filter="url(#b6)" opacity="0.7"/>
<path d="M1320 985 C1316 1020 1300 1055 1280 1080" fill="none" stroke="#eda988" stroke-width="14" filter="url(#b6)" opacity="0.7"/>
<!-- wisps over ears -->
<g fill="none" stroke="#2a2020" stroke-width="1.4" opacity="0.55" filter="url(#b1)">
<path d="M730 990 C736 1030 742 1060 746 1098"/><path d="M738 998 C746 1030 750 1060 752 1092"/><path d="M722 975 C730 1010 738 1040 742 1070"/><path d="M744 1004 C752 1030 756 1050 758 1075"/><path d="M716 962 C722 990 730 1015 738 1040"/>
<path d="M1300 990 C1294 1030 1288 1060 1284 1098"/><path d="M1292 998 C1284 1030 1280 1060 1278 1092"/><path d="M1308 975 C1300 1010 1292 1040 1288 1070"/><path d="M1286 1004 C1278 1030 1274 1050 1272 1075"/><path d="M1314 962 C1308 990 1300 1015 1292 1040"/>
</g>
<!-- skin -->
<g filter="url(#b10)"><path d="M756.0 1000.0 C756.0 990.0 754.7 991.7 756.0 970.0 C757.3 948.3 756.7 956.7 760.0 935.0 C763.3 913.3 760.7 923.3 766.0 905.0 C771.3 886.7 768.7 898.3 776.0 880.0 C783.3 861.7 780.7 870.0 788.0 850.0 C795.3 830.0 793.5 840.0 798.0 820.0 C802.5 800.0 796.1 810.1 801.5 790.0 C806.9 769.9 800.7 780.0 814.2 759.8 C827.7 739.6 816.6 747.1 842.0 729.3 C867.4 711.5 853.1 718.3 890.3 706.5 C927.5 694.7 911.4 699.7 953.7 693.8 C996.0 687.9 979.1 691.3 1017.1 688.8 C1055.1 686.3 1038.2 685.8 1067.8 686.2 C1097.4 686.6 1076.3 684.1 1105.9 690.0 C1135.5 695.9 1127.0 692.6 1156.6 704.0 C1186.2 715.4 1173.6 707.4 1194.7 724.3 C1215.8 741.2 1207.3 732.8 1220.0 754.7 C1232.7 776.6 1226.0 768.2 1232.7 790.0 C1239.4 811.8 1233.6 800.0 1240.0 820.0 C1246.4 840.0 1244.0 830.0 1252.0 850.0 C1260.0 870.0 1258.0 857.7 1264.0 880.0 C1270.0 902.3 1267.2 892.7 1270.0 917.0 C1272.8 941.3 1271.4 928.7 1272.5 953.0 C1273.6 977.3 1273.2 974.3 1273.4 990.0 C1273.6 1005.7 1273.1 996.7 1273.0 1000.0 L1273 1400 L756 1400 Z" fill="url(#skg)"/></g>
<path d="M770 1010 L1262 1010 L1262 1400 L770 1400 Z" fill="url(#skg)" filter="url(#b3)"/>
<!-- jaw shade -->
<path d="M1250.5 1114.5 C1247.8 1123.0 1247.7 1124.9 1242.3 1140.0 C1236.9 1155.1 1244.6 1139.1 1234.4 1159.8 C1224.2 1180.5 1229.0 1175.2 1211.6 1202.2 C1194.2 1229.2 1204.1 1216.8 1182.2 1240.7 C1160.3 1264.6 1170.6 1253.0 1146.0 1274.0 C1121.4 1295.0 1135.0 1286.4 1108.3 1303.7 C1081.6 1321.0 1095.9 1315.9 1066.0 1326.0 C1036.1 1336.1 1050.4 1333.6 1018.5 1334.0 C986.6 1334.4 1000.9 1336.6 970.3 1327.2 C939.7 1317.8 954.3 1323.0 926.8 1305.9 C899.3 1288.8 913.1 1297.0 887.7 1276.0 C862.3 1255.0 872.8 1266.5 850.7 1242.8 C828.6 1219.1 839.1 1232.0 821.3 1204.8 C803.5 1177.6 809.3 1185.3 797.4 1161.3 C785.5 1137.3 792.0 1150.2 785.6 1132.8 C779.2 1115.4 781.6 1120.9 778.2 1109.0 C774.8 1097.1 776.4 1101.0 775.5 1097.0" fill="none" stroke="#ecc6b6" stroke-width="16" filter="url(#b6)" opacity="0.75"/>
<!-- cheek tint -->
<ellipse cx="845" cy="1090" rx="55" ry="45" fill="#f8d9cd" opacity="0.5" filter="url(#b10)"/>
<ellipse cx="1195" cy="1090" rx="55" ry="45" fill="#f8d9cd" opacity="0.5" filter="url(#b10)"/>
<!-- eye socket shade -->
<ellipse cx="900" cy="950" rx="62" ry="22" fill="#f0d0c2" opacity="0.6" filter="url(#b8)"/>
<ellipse cx="1130" cy="950" rx="62" ry="22" fill="#f0d0c2" opacity="0.6" filter="url(#b8)"/>
<!-- nose -->
<path d="M1000 955 C998 1020 990 1070 968 1102" fill="none" stroke="#efd0c3" stroke-width="10" filter="url(#b6)" opacity="0.8"/>
<path d="M1044 955 C1046 1020 1054 1070 1074 1102" fill="none" stroke="#efd0c3" stroke-width="10" filter="url(#b6)" opacity="0.8"/>
<path d="M1021 930 L1021 1095" fill="none" stroke="#fffaf6" stroke-width="11" filter="url(#b6)" opacity="0.95"/>
<path d="M954 1108 C956 1128 976 1132 992 1127 C1004 1141 1038 1141 1048 1127 C1064 1132 1084 1128 1086 1108" fill="none" stroke="#e6b6a6" stroke-width="5" filter="url(#b3)"/>
<ellipse cx="982" cy="1125" rx="12" ry="4.5" fill="#c9968a" filter="url(#b2)" transform="rotate(-12 982 1125)"/>
<ellipse cx="1060" cy="1125" rx="12" ry="4.5" fill="#c9968a" filter="url(#b2)" transform="rotate(12 1060 1125)"/>
<!-- brows -->
<path d="M801.7 914.7 C812.5 909.4 812.0 906.1 834.2 898.7 C856.4 891.3 845.5 894.0 868.3 892.5 C891.1 891.1 882.0 891.1 902.5 894.3 C923.0 897.4 912.7 896.0 929.8 901.9 C946.9 907.9 945.7 908.8 953.7 912.2" fill="none" stroke="#9c887e" stroke-width="9" stroke-linecap="round" filter="url(#b3)" opacity="0.8"/>
<path d="M1090.4 911.3 C1097.8 907.9 1095.5 907.1 1112.6 901.1 C1129.6 895.1 1120.5 896.5 1141.6 893.4 C1162.7 890.3 1153.0 890.0 1175.7 891.7 C1198.5 893.4 1189.4 891.4 1209.9 898.5 C1230.4 905.6 1228.1 908.2 1237.2 913.0" fill="none" stroke="#9c887e" stroke-width="9" stroke-linecap="round" filter="url(#b3)" opacity="0.8"/>
<!-- eyes -->
<path d="M834.2 965.6 C841.0 961.1 840.4 959.7 854.7 952.0 C868.9 944.3 860.9 946.9 876.9 942.6 C892.8 938.3 886.0 938.6 902.5 939.2 C919.0 939.7 912.2 937.7 926.4 944.3 C940.6 950.8 938.9 954.0 945.2 958.8" fill="none" stroke="#d3a898" stroke-width="2.6" filter="url(#b2)"/>
<path d="M1192.8 964.8 C1186.6 961.1 1187.7 960.8 1174.0 953.7 C1160.4 946.6 1167.2 948.0 1151.8 943.4 C1136.5 938.9 1143.3 939.2 1127.9 940.0 C1112.6 940.9 1118.8 939.2 1105.7 946.0 C1092.6 952.8 1094.3 955.7 1088.6 960.5" fill="none" stroke="#d3a898" stroke-width="2.6" filter="url(#b2)"/>
<g filter="url(#b1)">
<path d="M836.7 971.6 C843.3 967.4 843.0 966.2 856.4 958.8 C869.7 951.4 862.1 953.7 876.9 949.4 C891.7 945.1 885.4 945.1 900.8 946.0 C916.1 946.9 909.3 944.3 923.0 952.0 C936.6 959.7 931.2 957.1 941.8 969.1 C952.3 981.0 950.3 981.6 954.6 987.8 C945.7 988.4 945.5 988.7 928.1 989.6 C910.7 990.4 919.6 991.0 902.5 990.4 C885.4 989.8 893.9 991.5 876.9 987.8 C859.8 984.1 864.6 984.7 851.2 979.3 C837.9 973.9 841.6 974.2 836.7 971.6 Z" fill="#eeeceb"/><path d="M1191.1 970.8 C1184.9 967.4 1185.4 967.4 1172.3 960.5 C1159.2 953.7 1166.1 954.8 1151.8 950.3 C1137.6 945.7 1144.4 945.7 1129.6 946.9 C1114.8 948.0 1120.5 946.3 1107.4 953.7 C1094.3 961.1 1100.3 958.2 1090.4 969.1 C1080.4 979.9 1081.8 980.4 1077.5 986.1 C1086.4 987.3 1086.6 988.1 1104.0 989.6 C1121.4 991.0 1112.6 991.3 1129.6 990.4 C1146.7 989.6 1139.9 990.7 1155.3 987.0 C1170.6 983.3 1163.8 984.7 1175.7 979.3 C1187.7 973.9 1186.0 973.6 1191.1 970.8 Z" fill="#eeeceb"/>
<g clip-path="url(#lec)"><circle cx="899.9" cy="969" r="22.4" fill="url(#iris)"/><ellipse cx="901.6" cy="961" rx="4.6" ry="5.6" fill="#dfe9f4" opacity="0.95"/><path d="M836 968 C860 946 940 940 956 990" fill="none" stroke="#3a2823" stroke-width="9" opacity="0.5"/></g>
<g clip-path="url(#rec)"><circle cx="1127.9" cy="969" r="22.4" fill="url(#iris)"/><ellipse cx="1126" cy="961" rx="4.6" ry="5.6" fill="#dfe9f4" opacity="0.95"/><path d="M1192 968 C1168 946 1090 940 1076 990" fill="none" stroke="#3a2823" stroke-width="9" opacity="0.5"/></g>
<path d="M836.7 971.6 C843.3 967.4 843.0 966.2 856.4 958.8 C869.7 951.4 862.1 953.7 876.9 949.4 C891.7 945.1 885.4 945.1 900.8 946.0 C916.1 946.9 909.3 944.3 923.0 952.0 C936.6 959.7 931.2 957.1 941.8 969.1 C952.3 981.0 950.3 981.6 954.6 987.8" fill="none" stroke="#4a332c" stroke-width="3.6" stroke-linecap="round"/>
<path d="M1191.1 970.8 C1184.9 967.4 1185.4 967.4 1172.3 960.5 C1159.2 953.7 1166.1 954.8 1151.8 950.3 C1137.6 945.7 1144.4 945.7 1129.6 946.9 C1114.8 948.0 1120.5 946.3 1107.4 953.7 C1094.3 961.1 1100.3 958.2 1090.4 969.1 C1080.4 979.9 1081.8 980.4 1077.5 986.1" fill="none" stroke="#4a332c" stroke-width="3.6" stroke-linecap="round"/>
<path d="M954.6 987.8 C945.7 988.4 945.5 988.7 928.1 989.6 C910.7 990.4 919.6 991.0 902.5 990.4 C885.4 989.8 893.9 991.5 876.9 987.8 C859.8 984.1 864.6 984.7 851.2 979.3 C837.9 973.9 841.6 974.2 836.7 971.6" fill="none" stroke="#c99d90" stroke-width="1.8" stroke-linecap="round"/>
<path d="M1077.5 986.1 C1086.4 987.3 1086.6 988.1 1104.0 989.6 C1121.4 991.0 1112.6 991.3 1129.6 990.4 C1146.7 989.6 1139.9 990.7 1155.3 987.0 C1170.6 983.3 1163.8 984.7 1175.7 979.3 C1187.7 973.9 1186.0 973.6 1191.1 970.8" fill="none" stroke="#c99d90" stroke-width="1.8" stroke-linecap="round"/>
</g>
<path d="M850 996 C880 1006 925 1006 950 996" fill="none" stroke="#e7c4b8" stroke-width="5" filter="url(#b3)" opacity="0.9"/>
<path d="M1178 996 C1148 1006 1103 1006 1078 996" fill="none" stroke="#e7c4b8" stroke-width="5" filter="url(#b3)" opacity="0.9"/>
<!-- lips -->
<g filter="url(#b2)">
<path d="M925.7 1190.7 C950 1186 975 1178 993 1177.6 C1004 1177 1012 1183 1019.8 1183 C1028 1183 1036 1176.5 1045.3 1176.5 C1064 1178 1090 1185 1108.3 1187.4 C1085 1200 1050 1204 1020 1204 C990 1204 950 1202 925.7 1190.7 Z" fill="#ebc0b8"/>
<path d="M930 1193 C950 1204 990 1206 1020 1206 C1050 1206 1088 1203 1105 1190 C1098 1215 1072 1240.7 1019.8 1240.7 C970 1240.7 940 1218 930 1193 Z" fill="#f4d0c8"/>
<path d="M925.7 1190.7 C950 1202 990 1205 1020 1205 C1050 1205 1086 1201 1108.3 1187.4" fill="none" stroke="#cf9c95" stroke-width="3" stroke-linecap="round"/>
</g>
<ellipse cx="1020" cy="1222" rx="42" ry="9" fill="#f9dbd4" filter="url(#b6)" opacity="0.8"/>
<path d="M972 1254 C1000 1264 1040 1264 1068 1254" fill="none" stroke="#f0d2c6" stroke-width="6" filter="url(#b6)" opacity="0.6"/>
</g>
<!-- overlays -->
<path d="M1022.4 924 V1094" stroke="#fff" stroke-width="1.8" stroke-dasharray="4.5 4" opacity="0.95"/>
<g fill="#fffb8c"><circle cx="821.0" cy="670.1" r="3.7"/><circle cx="1205.8" cy="671.6" r="3.7"/><circle cx="1031.2" cy="783.4" r="3.7"/><circle cx="1011.9" cy="825.4" r="3.7"/><circle cx="835.8" cy="890.1" r="3.7"/><circle cx="882.3" cy="885.1" r="3.7"/><circle cx="927.0" cy="892.5" r="3.7"/><circle cx="1103.1" cy="892.5" r="3.7"/><circle cx="1145.1" cy="885.7" r="3.7"/><circle cx="1191.9" cy="888.7" r="3.7"/><circle cx="798.0" cy="915.3" r="3.7"/><circle cx="837.9" cy="910.6" r="3.7"/><circle cx="879.6" cy="912.3" r="3.7"/><circle cx="920.2" cy="917.1" r="3.7"/><circle cx="962.2" cy="920.6" r="3.7"/><circle cx="1015.5" cy="920.6" r="3.7"/><circle cx="1067.6" cy="919.7" r="3.7"/><circle cx="1108.7" cy="916.2" r="3.7"/><circle cx="1189.5" cy="909.7" r="3.7"/><circle cx="1230.3" cy="913.2" r="3.7"/><circle cx="875.8" cy="956.7" r="3.7"/><circle cx="902.4" cy="953.2" r="3.7"/><circle cx="929.1" cy="961.5" r="3.7"/><circle cx="854.2" cy="973.0" r="3.7"/><circle cx="901.5" cy="971.5" r="3.7"/><circle cx="874.3" cy="984.2" r="3.7"/><circle cx="898.9" cy="989.6" r="3.7"/><circle cx="923.7" cy="988.7" r="3.7"/><circle cx="947.4" cy="983.4" r="3.7"/><circle cx="982.3" cy="983.4" r="3.7"/><circle cx="1016.4" cy="983.4" r="3.7"/><circle cx="1050.7" cy="983.4" r="3.7"/><circle cx="1083.0" cy="983.4" r="3.7"/><circle cx="1106.0" cy="988.7" r="3.7"/><circle cx="1130.9" cy="989.3" r="3.7"/><circle cx="1154.9" cy="983.4" r="3.7"/><circle cx="1099.2" cy="962.1" r="3.7"/><circle cx="1127.4" cy="971.5" r="3.7"/><circle cx="1152.2" cy="957.9" r="3.7"/><circle cx="1175.6" cy="973.0" r="3.7"/><circle cx="1125.0" cy="952.3" r="3.7"/><circle cx="763.3" cy="991.1" r="3.7"/><circle cx="772.2" cy="1065.6" r="3.7"/><circle cx="782.6" cy="1113.9" r="3.7"/><circle cx="1269.4" cy="995.5" r="3.7"/><circle cx="1261.4" cy="1067.7" r="3.7"/><circle cx="1250.2" cy="1113.9" r="3.7"/><circle cx="984.4" cy="1071.0" r="3.7"/><circle cx="1054.0" cy="1071.0" r="3.7"/><circle cx="953.3" cy="1116.8" r="3.7"/><circle cx="1080.0" cy="1116.8" r="3.7"/><circle cx="988.7" cy="1135.2" r="3.7"/><circle cx="1049.6" cy="1135.2" r="3.7"/><circle cx="1020.7" cy="1141.3" r="3.7"/><circle cx="1020.3" cy="1162.4" r="3.7"/><circle cx="993.1" cy="1175.9" r="3.7"/><circle cx="1045.3" cy="1174.8" r="3.7"/><circle cx="960.0" cy="1184.1" r="3.7"/><circle cx="1019.8" cy="1183.5" r="3.7"/><circle cx="1076.3" cy="1181.3" r="3.7"/><circle cx="925.7" cy="1190.7" r="3.7"/><circle cx="1108.3" cy="1187.4" r="3.7"/><circle cx="972.4" cy="1197.2" r="3.7"/><circle cx="971.3" cy="1199.8" r="3.7"/><circle cx="1063.7" cy="1195.0" r="3.7"/><circle cx="1063.7" cy="1198.7" r="3.7"/><circle cx="1019.8" cy="1202.2" r="3.7"/><circle cx="1019.8" cy="1207.0" r="3.7"/><circle cx="951.3" cy="1217.4" r="3.7"/><circle cx="1084.8" cy="1215.0" r="3.7"/><circle cx="983.3" cy="1236.7" r="3.7"/><circle cx="1055.0" cy="1235.7" r="3.7"/><circle cx="1019.8" cy="1241.7" r="3.7"/><circle cx="797.4" cy="1160.7" r="3.7"/><circle cx="821.3" cy="1204.3" r="3.7"/><circle cx="850.7" cy="1243.3" r="3.7"/><circle cx="887.7" cy="1276.1" r="3.7"/><circle cx="926.8" cy="1305.9" r="3.7"/><circle cx="970.3" cy="1328.7" r="3.7"/><circle cx="1018.5" cy="1337.0" r="3.7"/><circle cx="1065.9" cy="1327.2" r="3.7"/><circle cx="1108.3" cy="1304.1" r="3.7"/><circle cx="1145.9" cy="1273.9" r="3.7"/><circle cx="1182.2" cy="1240.7" r="3.7"/><circle cx="1211.6" cy="1202.2" r="3.7"/><circle cx="1234.4" cy="1159.8" r="3.7"/></g>
<circle cx="1023.8" cy="1106.5" r="8.3" fill="#f0a900" stroke="#fff" stroke-width="1.6"/><rect x="1022.8" y="1101" width="1.8" height="5" fill="#fff"/>
<!-- sticker -->
<g font-family="DejaVu Sans, Liberation Sans, sans-serif" font-weight="bold" fill="#fff" stroke="#fff" stroke-width="0.8" stroke-linejoin="round" style="filter:drop-shadow(0 0 1.5px rgba(214,180,165,.9))">
<text x="990" y="885" font-size="26" textLength="60" lengthAdjust="spacingAndGlyphs">April</text>
<text x="963" y="920" font-size="31" textLength="124" lengthAdjust="spacingAndGlyphs">F<tspan fill="#ffe14d">o</tspan>ols'<tspan fill="#ff3f8e">D</tspan>ay</text>
</g>
<rect x="930.3" y="838.5" width="182" height="111.6" fill="none" stroke="#6faaf7" stroke-width="2"/>
<g fill="#6faaf7"><rect x="925.5" y="833.5" width="9" height="9"/><rect x="1108.5" y="833.5" width="9" height="9"/><rect x="925.5" y="946" width="9" height="6"/><rect x="1108.5" y="946" width="9" height="6"/></g>
<circle cx="1020.8" cy="895" r="7.6" fill="#6aa7f5" stroke="#fff" stroke-width="1.4"/><rect x="1020" y="890.5" width="1.6" height="5" fill="#fff"/>
<rect x="908" y="812.3" width="240.2" height="142.6" rx="9" fill="none" stroke="#ff2600" stroke-width="6.8"/>
</svg>
<!-- ===== components panel (generated) ===== -->
<div class="panel" style="left:1488px;top:140px;width:720px;height:1454px"></div>
<div class="t hd" style="left:1508px;top:161px;font-size:33.2px;line-height:38px">Components</div>
<div class="a" style="left:1488px;top:220px;width:720px;height:1264px;overflow:hidden"><div class="a" style="left:-1488px;top:-220px;width:2880px;height:1600px">
<div class="card" style="left:1506px;top:220px;width:684px;height:604px"></div>
<svg style="left:1530px;top:247.5px" width="18" height="14" viewBox="0 0 18 14"><path d="M0.3 0.4 H17.7 L9 13.8 Z" fill="#9a9aa4"/></svg>
<svg style="left:1569px;top:238px" width="32" height="32" viewBox="0 0 32 32"><g fill="none" stroke="#8a8a9a" stroke-width="2.7" stroke-linecap="round" stroke-linejoin="round"><path d="M2 2.4 L28.6 29.6"/><path d="M2 29.6 L28.6 2.4"/><path d="M17.6 2 H29.4 V13.4"/><path d="M17.6 30 H29.4 V18.6"/></g></svg>
<div class="t hd" style="left:1608.6px;top:241.4px;font-size:27.5px;letter-spacing:0.68px;color:#fff;">2D locs &amp; transform</div>
<div class="a" style="left:2035.0000000000002px;top:239.0px;width:29.6px;height:29.6px;border-radius:50%;background:#747786;box-shadow:0 1px 3px rgba(0,0,0,.4)"></div><div class="t" style="left:2035.0000000000002px;top:239.5px;width:29.6px;text-align:center;font-size:24px;line-height:29.6px;color:#d4d4dc;font-weight:bold">?</div>
<svg style="left:0;top:0" width="1" height="1"><g fill="none" stroke="#9a9ba5" stroke-width="2.6" stroke-linecap="butt"><path d="M2113.3 249.2 A12.2 12.2 0 1 1 2108.1 243.2"/><path d="M2101.4 254.4 L2114.4 241.6"/></g></svg>
<svg style="left:0;top:0" width="1" height="1"><g fill="#7f88a8"><circle cx="2153.5" cy="254" r="13"/><circle cx="2153.5" cy="241.4" r="4.1"/><circle cx="2162.4" cy="245.1" r="4.1"/><circle cx="2166.1" cy="254.0" r="4.1"/><circle cx="2162.4" cy="262.9" r="4.1"/><circle cx="2153.5" cy="266.6" r="4.1"/><circle cx="2144.6" cy="262.9" r="4.1"/><circle cx="2140.9" cy="254.0" r="4.1"/><circle cx="2144.6" cy="245.1" r="4.1"/></g><circle cx="2153.5" cy="254" r="5.4" fill="none" stroke="#3f4352" stroke-width="2.9"/></svg>
<div class="a" style="left:1720px;top:322px;width:132px;height:44px;background:#d0d0d5;border-radius:8px 0 0 8px"></div>
<div class="a" style="left:1852px;top:322px;width:132px;height:44px;background:#6c6f7c;border-radius:0 8px 8px 0"></div>
<div class="t " style="left:1753.5px;top:332.6px;font-size:25.4px;letter-spacing:0.4px;color:#0a0a0c;-webkit-text-stroke:0.3px #0a0a0c">Basic</div>
<div class="t " style="left:1858.5px;top:332.4px;font-size:25.6px;letter-spacing:0.4px;color:#fff;">Advanced</div>
<svg style="left:0;top:0" width="1" height="1"><g fill="none" stroke="#9a9ba5" stroke-width="2.6" stroke-linecap="butt"><path d="M1557.4 429.2 A12.2 12.2 0 1 1 1552.2 423.2"/><path d="M1545.5 434.4 L1558.5 421.6"/></g></svg>
<div class="t " style="left:1572.4px;top:421.2px;font-size:27px;letter-spacing:0.19px;color:#fff;">Size</div>
<svg style="left:0;top:0" width="1" height="1"><g fill="none" stroke="#9a9ba5" stroke-width="2.6" stroke-linecap="butt"><path d="M1557.4 499.2 A12.2 12.2 0 1 1 1552.2 493.2"/><path d="M1545.5 504.4 L1558.5 491.6"/></g></svg>
<div class="t " style="left:1572.4px;top:491.2px;font-size:27px;letter-spacing:1.23px;color:#fff;">Location</div>
<svg style="left:0;top:0" width="1" height="1"><g fill="none" stroke="#9a9ba5" stroke-width="2.6" stroke-linecap="butt"><path d="M1557.4 569.2 A12.2 12.2 0 1 1 1552.2 563.2"/><path d="M1545.5 574.4 L1558.5 561.6"/></g></svg>
<div class="t " style="left:1572.4px;top:561.2px;font-size:27px;letter-spacing:0.96px;color:#fff;">Rotate</div>
<svg style="left:0;top:0" width="1" height="1"><g fill="none" stroke="#9a9ba5" stroke-width="2.6" stroke-linecap="butt"><path d="M1557.4 639.2 A12.2 12.2 0 1 1 1552.2 633.2"/><path d="M1545.5 644.4 L1558.5 631.6"/></g></svg>
<div class="t " style="left:1572.4px;top:631.2px;font-size:27px;letter-spacing:0.47px;color:#fff;">Scale</div>
<svg style="left:0;top:0" width="1" height="1"><g fill="none" stroke="#9a9ba5" stroke-width="2.6" stroke-linecap="butt"><path d="M1557.4 709.2 A12.2 12.2 0 1 1 1552.2 703.2"/><path d="M1545.5 714.4 L1558.5 701.6"/></g></svg>
<div class="t " style="left:1572.4px;top:701.2px;font-size:27px;letter-spacing:0.94px;color:#fff;">Center</div>
<div class="inp" style="left:1738px;top:408px;width:185px;height:50px"></div>
<div class="t " style="left:1754px;top:420.7px;font-size:24px;letter-spacing:-1.0px;color:#fff;">175</div>
<div class="t" style="left:1899.6px;top:422.5px;font-size:23.5px;color:#8e8f9c">X</div>
<svg style="left:1936px;top:421px" width="22" height="26" viewBox="0 0 22 26"><path d="M5.4 11 V7.6 a5.6 5.6 0 0 1 11.2 0 V11" fill="none" stroke="#b9b7cc" stroke-width="3"/><rect x="1" y="10.4" width="20" height="14.6" rx="2.4" fill="#b9b7cc"/></svg>
<div class="inp" style="left:1971px;top:408px;width:185px;height:50px"></div>
<div class="t " style="left:1987px;top:420.7px;font-size:24px;letter-spacing:-0.7px;color:#fff;">108</div>
<div class="t" style="left:2132px;top:422.5px;font-size:23.5px;color:#8e8f9c">Y</div>
<div class="inp" style="left:1738px;top:478px;width:205px;height:50px"></div>
<div class="t " style="left:1754px;top:490.7px;font-size:24px;letter-spacing:0.83px;color:#fff;">–0.008</div>
<div class="t" style="left:1919px;top:492.5px;font-size:23.5px;color:#8e8f9c">X</div>
<div class="inp" style="left:1951px;top:478px;width:205px;height:50px"></div>
<div class="t " style="left:1967px;top:490.7px;font-size:24px;letter-spacing:0.31px;color:#fff;">0.314847345</div>
<div class="t" style="left:2132px;top:492.5px;font-size:23.5px;color:#8e8f9c">Y</div>
<div class="inp" style="left:1738px;top:548px;width:418px;height:50px"></div>
<div class="t " style="left:1754px;top:560.7px;font-size:24px;letter-spacing:0px;color:#fff;">0</div>
<div class="inp" style="left:1738px;top:618px;width:205px;height:50px"></div>
<div class="t " style="left:1753px;top:630.7px;font-size:24px;letter-spacing:0px;color:#fff;">1</div>
<div class="t" style="left:1919px;top:632.5px;font-size:23.5px;color:#8e8f9c">X</div>
<div class="inp" style="left:1951px;top:618px;width:205px;height:50px"></div>
<div class="t " style="left:1966px;top:630.7px;font-size:24px;letter-spacing:0px;color:#fff;">1</div>
<div class="t" style="left:2132px;top:632.5px;font-size:23.5px;color:#8e8f9c">Y</div>
<div class="inp" style="left:1738px;top:688px;width:205px;height:50px"></div>
<div class="t " style="left:1754px;top:700.7px;font-size:24px;letter-spacing:0px;color:#fff;">0</div>
<div class="t" style="left:1919px;top:702.5px;font-size:23.5px;color:#8e8f9c">X</div>
<div class="inp" style="left:1951px;top:688px;width:205px;height:50px"></div>
<div class="t " style="left:1967px;top:700.7px;font-size:24px;letter-spacing:0px;color:#fff;">0</div>
<div class="t" style="left:2132px;top:702.5px;font-size:23.5px;color:#8e8f9c">Y</div>
<div class="t hd" style="left:1530px;top:766.0px;font-size:25.5px;letter-spacing:0.5px;color:#fff;">Flip</div>
<svg style="left:1643px;top:762px" width="32" height="27" viewBox="0 0 32 27"><path d="M14.4 1 V25.6 H0.6 Z" fill="#b4b1c6"/><path d="M17.4 1 L31.4 25.6 H17.4 Z" fill="#8a889c"/></svg>
<svg style="left:1725px;top:759px" width="26" height="32" viewBox="0 0 26 32"><path d="M0.6 0.8 L25.4 14.4 H0.6 Z" fill="#b4b1c6"/><path d="M0.6 17.2 H25.4 L0.6 30.8 Z" fill="#8a889c"/></svg>
<div class="card" style="left:1506px;top:844px;width:684px;height:214px"></div>
<svg style="left:1530px;top:871.5px" width="18" height="14" viewBox="0 0 18 14"><path d="M0.3 0.4 H17.7 L9 13.8 Z" fill="#9a9aa4"/></svg>
<svg style="left:1569.5px;top:861px" width="29" height="33" viewBox="0 0 28 32"><g fill="none" stroke="#8a8a9a" stroke-width="2.7" stroke-linejoin="round" stroke-linecap="round"><path d="M4 1.6 H18.4 L26.4 9.6 V28 a2.4 2.4 0 0 1 -2.4 2.4 H4 a2.4 2.4 0 0 1 -2.4 -2.4 V4 A2.4 2.4 0 0 1 4 1.6 Z"/><path d="M18.4 2 V9.6 H26"/><circle cx="9.2" cy="14.4" r="3"/><path d="M4 29.6 L19.6 16.4 L26.2 22.8"/></g></svg>
<div class="t hd" style="left:1608.6px;top:865.5px;font-size:27.3px;letter-spacing:0.7px;color:#fff;">Image</div>
<div class="a" style="left:1983.1000000000001px;top:863.0px;width:29.6px;height:29.6px;border-radius:50%;background:#747786;box-shadow:0 1px 3px rgba(0,0,0,.4)"></div><div class="t" style="left:1983.1000000000001px;top:863.5px;width:29.6px;text-align:center;font-size:24px;line-height:29.6px;color:#d4d4dc;font-weight:bold">?</div>
<svg style="left:0;top:0" width="1" height="1"><g fill="none" stroke="#9a9ba5" stroke-width="2.6" stroke-linecap="butt"><path d="M2061.4 873.2 A12.2 12.2 0 1 1 2056.2 867.2"/><path d="M2049.5 878.4 L2062.5 865.6"/></g></svg>
<div class="a" style="left:2086.2px;top:862px;width:32px;height:32px;border-radius:4px;background:linear-gradient(#1c6ae4,#1556cf);box-shadow:0 1px 2px rgba(0,0,0,.3)"></div><svg style="left:2086.2px;top:862px" width="32" height="32" viewBox="0 0 32 32"><path d="M7.6 17.8 L13.6 23.8 L24.2 7.8" fill="none" stroke="#fff" stroke-width="3.6" stroke-linecap="round" stroke-linejoin="round"/></svg>
<svg style="left:0;top:0" width="1" height="1"><g fill="#7f88a8"><circle cx="2153.8" cy="878.2" r="13"/><circle cx="2153.8" cy="865.6" r="4.1"/><circle cx="2162.7" cy="869.3" r="4.1"/><circle cx="2166.4" cy="878.2" r="4.1"/><circle cx="2162.7" cy="887.1" r="4.1"/><circle cx="2153.8" cy="890.8" r="4.1"/><circle cx="2144.9" cy="887.1" r="4.1"/><circle cx="2141.2" cy="878.2" r="4.1"/><circle cx="2144.9" cy="869.3" r="4.1"/></g><circle cx="2153.8" cy="878.2" r="5.4" fill="none" stroke="#3f4352" stroke-width="2.9"/></svg>
<div class="t " style="left:1540.7px;top:929.8px;font-size:27px;letter-spacing:0.87px;color:#fff;">Image file</div>
<div class="inp" style="left:1738px;top:916px;width:418px;height:50px"></div>
<div class="a" style="left:1744.5px;top:922px;width:87.5px;height:38px;border-radius:7px;background:#1d1e24;border:1.6px solid #7c7d86"></div>
<div class="t fool" style="left:1746px;top:925px;width:84px;text-align:center;font-size:12.5px;line-height:15.5px;font-weight:bold;white-space:normal">April<br>Fo<span style="color:#ffe45c">o</span>ls'<span style="color:#ff4fa0">D</span>ay</div>
<div class="t " style="left:1854.5px;top:929.9px;font-size:24px;letter-spacing:0.25px;color:#fff;">zsh.pag</div>
<svg style="left:2124px;top:929px" width="24" height="26" viewBox="0 0 24 26"><g fill="none" stroke="#fff" stroke-width="2.6" stroke-linecap="round" stroke-linejoin="round"><path d="M1.6 6 H22.4"/><path d="M7.4 5.6 V2.4 a1 1 0 0 1 1 -1 h7.2 a1 1 0 0 1 1 1 V5.6"/><path d="M4 6.4 V22.6 a2 2 0 0 0 2 2 H18 a2 2 0 0 0 2 -2 V6.4"/><path d="M9.4 11.4 V19.4 M14.6 11.4 V19.4"/></g></svg>
<div class="a" style="left:1496.5px;top:886.2px;width:679.5px;height:88.4px;border:6.6px solid #ff2600;border-radius:13px"></div>
<div class="t " style="left:1540.7px;top:1005.8px;font-size:27px;letter-spacing:0.82px;color:#fff;">Fill mode</div>
<div class="inp" style="left:1738px;top:992px;width:418px;height:50px"></div>
<div class="t " style="left:1758.3px;top:1005.9px;font-size:24px;letter-spacing:0.77px;color:#fff;">Scale to display in whole</div>
<svg style="left:2125.6px;top:1012.5px" width="16" height="12" viewBox="0 0 16 12"><path d="M2.6 3 L8 8.4 L13.4 3" fill="none" stroke="#e8e8ec" stroke-width="2.6" stroke-linecap="round" stroke-linejoin="round"/></svg>
<div class="card" style="left:1506px;top:1078px;width:684px;height:214px"></div>
<svg style="left:1530px;top:1105.5px" width="18" height="14" viewBox="0 0 18 14"><path d="M0.3 0.4 H17.7 L9 13.8 Z" fill="#9a9aa4"/></svg>
<svg style="left:1568px;top:1095px" width="33" height="33" viewBox="0 0 33 33"><g fill="none" stroke="#8a8a9a" stroke-width="2.6"><circle cx="12" cy="12" r="10"/><circle cx="21" cy="21" r="10"/></g><circle cx="16.5" cy="16.5" r="5" fill="#8a8a9a" opacity="0.35"/></svg>
<div class="t hd" style="left:1608.6px;top:1099.5px;font-size:27.3px;letter-spacing:1.0px;color:#fff;">Blend mode</div>
<div class="a" style="left:1983.1000000000001px;top:1097.0px;width:29.6px;height:29.6px;border-radius:50%;background:#747786;box-shadow:0 1px 3px rgba(0,0,0,.4)"></div><div class="t" style="left:1983.1000000000001px;top:1097.5px;width:29.6px;text-align:center;font-size:24px;line-height:29.6px;color:#d4d4dc;font-weight:bold">?</div>
<svg style="left:0;top:0" width="1" height="1"><g fill="none" stroke="#9a9ba5" stroke-width="2.6" stroke-linecap="butt"><path d="M2061.4 1107.2 A12.2 12.2 0 1 1 2056.2 1101.2"/><path d="M2049.5 1112.4 L2062.5 1099.6"/></g></svg>
<div class="a" style="left:2086.2px;top:1096px;width:32px;height:32px;border-radius:4px;background:linear-gradient(#1c6ae4,#1556cf);box-shadow:0 1px 2px rgba(0,0,0,.3)"></div><svg style="left:2086.2px;top:1096px" width="32" height="32" viewBox="0 0 32 32"><path d="M7.6 17.8 L13.6 23.8 L24.2 7.8" fill="none" stroke="#fff" stroke-width="3.6" stroke-linecap="round" stroke-linejoin="round"/></svg>
<svg style="left:0;top:0" width="1" height="1"><g fill="#7f88a8"><circle cx="2153.8" cy="1112.2" r="13"/><circle cx="2153.8" cy="1099.6" r="4.1"/><circle cx="2162.7" cy="1103.3" r="4.1"/><circle cx="2166.4" cy="1112.2" r="4.1"/><circle cx="2162.7" cy="1121.1" r="4.1"/><circle cx="2153.8" cy="1124.8" r="4.1"/><circle cx="2144.9" cy="1121.1" r="4.1"/><circle cx="2141.2" cy="1112.2" r="4.1"/><circle cx="2144.9" cy="1103.3" r="4.1"/></g><circle cx="2153.8" cy="1112.2" r="5.4" fill="none" stroke="#3f4352" stroke-width="2.9"/></svg>
<div class="t " style="left:1540.7px;top:1163.8px;font-size:27px;letter-spacing:0.89px;color:#fff;">Blend mode</div>
<div class="inp" style="left:1738px;top:1150px;width:418px;height:50px"></div>
<div class="t " style="left:1758.3px;top:1163.9px;font-size:24px;letter-spacing:0.53px;color:#fff;">Normal</div>
<svg style="left:2125.6px;top:1170.5px" width="16" height="12" viewBox="0 0 16 12"><path d="M2.6 3 L8 8.4 L13.4 3" fill="none" stroke="#e8e8ec" stroke-width="2.6" stroke-linecap="round" stroke-linejoin="round"/></svg>
<div class="t " style="left:1540.7px;top:1239.8px;font-size:27px;letter-spacing:0.89px;color:#fff;">Transparency</div>
<div class="a" style="left:1742px;top:1249.6px;width:300px;height:5.6px;border-radius:3px;background:#1a7fe8"></div>
<div class="a" style="left:2030px;top:1238px;width:29.6px;height:29.6px;border-radius:50%;background:#d2d2d4;box-shadow:0 1px 3px rgba(0,0,0,.45)"></div>
<div class="inp" style="left:2084.5px;top:1226px;width:71.5px;height:50px;overflow:hidden"><div class="t" style="left:15.5px;top:13.2px;font-size:24px;letter-spacing:0.45px;color:#fff;width:44px;overflow:hidden">100%</div></div>
<div class="card" style="left:1506px;top:1312px;width:684px;height:300px"></div>
<svg style="left:1530px;top:1339.5px" width="18" height="14" viewBox="0 0 18 14"><path d="M0.3 0.4 H17.7 L9 13.8 Z" fill="#9a9aa4"/></svg>
<svg style="left:1568px;top:1329.5px" width="33" height="33" viewBox="0 0 33 33"><g fill="none" stroke="#8a8a9a" stroke-width="2.6" stroke-linecap="round"><path d="M1.6 9 V5 a3.4 3.4 0 0 1 3.4 -3.4 H9"/><path d="M24 1.6 H28 a3.4 3.4 0 0 1 3.4 3.4 V9"/><path d="M31.4 24 V28 a3.4 3.4 0 0 1 -3.4 3.4 H24"/><path d="M9 31.4 H5 a3.4 3.4 0 0 1 -3.4 -3.4 V24"/><path d="M16.5 6.6 C22.4 6.6 25.4 11 25.4 16 C25.4 22 21.6 26.4 16.5 26.4 C11.4 26.4 7.6 22 7.6 16 C7.6 11 10.6 6.6 16.5 6.6 Z"/></g></svg>
<div class="t hd" style="left:1608.6px;top:1333.5px;font-size:27.3px;letter-spacing:0.95px;color:#fff;">Face tracking</div>
<div class="a" style="left:1983.1000000000001px;top:1331.2px;width:29.6px;height:29.6px;border-radius:50%;background:#747786;box-shadow:0 1px 3px rgba(0,0,0,.4)"></div><div class="t" style="left:1983.1000000000001px;top:1331.7px;width:29.6px;text-align:center;font-size:24px;line-height:29.6px;color:#d4d4dc;font-weight:bold">?</div>
<svg style="left:0;top:0" width="1" height="1"><g fill="none" stroke="#9a9ba5" stroke-width="2.6" stroke-linecap="butt"><path d="M2061.4 1341.4 A12.2 12.2 0 1 1 2056.2 1335.4"/><path d="M2049.5 1346.6 L2062.5 1333.8"/></g></svg>
<div class="a" style="left:2086.2px;top:1330px;width:32px;height:32px;border-radius:4px;background:linear-gradient(#1c6ae4,#1556cf);box-shadow:0 1px 2px rgba(0,0,0,.3)"></div><svg style="left:2086.2px;top:1330px" width="32" height="32" viewBox="0 0 32 32"><path d="M7.6 17.8 L13.6 23.8 L24.2 7.8" fill="none" stroke="#fff" stroke-width="3.6" stroke-linecap="round" stroke-linejoin="round"/></svg>
<svg style="left:0;top:0" width="1" height="1"><g fill="#7f88a8"><circle cx="2153.8" cy="1346.2" r="13"/><circle cx="2153.8" cy="1333.6" r="4.1"/><circle cx="2162.7" cy="1337.3" r="4.1"/><circle cx="2166.4" cy="1346.2" r="4.1"/><circle cx="2162.7" cy="1355.1" r="4.1"/><circle cx="2153.8" cy="1358.8" r="4.1"/><circle cx="2144.9" cy="1355.1" r="4.1"/><circle cx="2141.2" cy="1346.2" r="4.1"/><circle cx="2144.9" cy="1337.3" r="4.1"/></g><circle cx="2153.8" cy="1346.2" r="5.4" fill="none" stroke="#3f4352" stroke-width="2.9"/></svg>
<div class="t " style="left:1540.7px;top:1397.8px;font-size:27px;letter-spacing:0.89px;color:#fff;">Anchor</div>
<div class="inp" style="left:1738px;top:1384px;width:418px;height:50px"></div>
<div class="t " style="left:1758.3px;top:1397.9px;font-size:24px;letter-spacing:0.27px;color:#fff;">Nose</div>
<svg style="left:2125.6px;top:1404.5px" width="16" height="12" viewBox="0 0 16 12"><path d="M2.6 3 L8 8.4 L13.4 3" fill="none" stroke="#e8e8ec" stroke-width="2.6" stroke-linecap="round" stroke-linejoin="round"/></svg>
<div class="t " style="left:1540.7px;top:1473.8px;font-size:27px;letter-spacing:0.89px;color:#fff;">Gender</div>
<div class="inp" style="left:1738px;top:1460px;width:418px;height:50px"></div>
<div class="t " style="left:1758.3px;top:1473.9px;font-size:24px;letter-spacing:0.6px;color:#fff;">Female and male</div>
<svg style="left:2125.6px;top:1480.5px" width="16" height="12" viewBox="0 0 16 12"><path d="M2.6 3 L8 8.4 L13.4 3" fill="none" stroke="#e8e8ec" stroke-width="2.6" stroke-linecap="round" stroke-linejoin="round"/></svg>
</div></div>
<div class="a" style="left:2196px;top:220px;width:6px;height:693px;background:#7d7f8a"></div>
<div class="a" style="left:1752px;top:1522px;width:192px;height:52px;border-radius:6px;background:#666976;border:1.5px solid #2a2c36;box-shadow:0 1px 2px rgba(0,0,0,.4)"></div>
<svg style="left:1761px;top:1535px" width="27" height="27" viewBox="0 0 27 27"><rect x="1.4" y="1.4" width="24.2" height="24.2" rx="2.6" fill="none" stroke="#fff" stroke-width="2.4"/><path d="M7.6 13.5 H19.4 M13.5 7.6 V19.4" stroke="#fff" stroke-width="2.2" stroke-linecap="round"/></svg>
<div class="t " style="left:1813.6px;top:1536.8px;font-size:27px;letter-spacing:0.53px;color:#fff;">Add co...</div>
<!-- ===== preview panel ===== -->
<div class="panel" style="left:2214px;top:140px;width:660px;height:1454px"></div>
<div class="t hd" style="left:2234px;top:161px;font-size:32.6px;line-height:38px">Preview</div>
<div class="t" style="left:2374px;top:160px;font-size:33.2px;line-height:38px;color:#8a8b9b">·High-performance device</div>
<svg style="left:2826.5px;top:163px" width="26" height="26" viewBox="0 0 26 26"><g fill="none" stroke="#8f90a0" stroke-width="2.6"><path d="M15.8 0 V8.6 H24.7"/><path d="M0 16.3 H9 V24.8"/></g></svg>
<svg style="left:2160px;top:163px" width="26" height="26" viewBox="0 0 26 26"><g fill="none" stroke="#8f90a0" stroke-width="2.6"><path d="M15.8 0 V8.6 H24.7"/><path d="M0 16.3 H9 V24.8"/></g></svg>
<svg style="left:0;top:0" width="1" height="1"><g fill="none" stroke="#9a9ba5" stroke-width="2.6"><path d="M2119.3 171.5 A12.1 12.1 0 1 1 2114.2 165.5"/><path d="M2107.5 176.6 L2120.5 163.8"/></g></svg>

<div class="a" style="left:2234px;top:236px;width:172px;height:48px;border-radius:10px;background:#272a34"></div>
<div class="t" style="left:2244px;top:244px;font-size:29px;line-height:34px;color:#fff">Woman…</div>
<svg style="left:2376px;top:255px" width="16" height="12" viewBox="0 0 16 12"><path d="M2.6 3 L8 8.4 L13.4 3" fill="none" stroke="#e8e8ec" stroke-width="2.6" stroke-linecap="round" stroke-linejoin="round"/></svg>
<div class="a" style="left:2426px;top:236px;width:144px;height:48px;border-radius:10px;background:#272a34"></div>
<div class="t" style="left:2445.5px;top:246px;font-size:24.6px;line-height:28px;color:#fff">9:16</div>
<svg style="left:2540px;top:255px" width="16" height="12" viewBox="0 0 16 12"><path d="M2.6 3 L8 8.4 L13.4 3" fill="none" stroke="#e8e8ec" stroke-width="2.6" stroke-linecap="round" stroke-linejoin="round"/></svg>
<div class="a" style="left:2586px;top:236px;width:192px;height:48px;border-radius:5px;background:#4c4e58"></div>
<div class="a" style="left:2586px;top:236px;width:64px;height:48px;border-radius:5px 0 0 5px;background:#007aff"></div>
<svg style="left:2608px;top:247px" width="20" height="26" viewBox="0 0 20 26"><rect x="1.2" y="1.2" width="17.6" height="23.6" rx="2.4" fill="none" stroke="#fff" stroke-width="2.4"/><path d="M1.2 19.6 H18.8 V22.6 a2.2 2.2 0 0 1 -2.2 2.2 H3.4 a2.2 2.2 0 0 1 -2.2 -2.2 Z" fill="#fff"/><rect x="8" y="21.4" width="4" height="1.6" rx="0.8" fill="#007aff"/></svg>
<svg style="left:2669px;top:245px" width="26" height="30" viewBox="0 0 26 30"><g fill="none" stroke="#fff" stroke-width="2.3"><circle cx="12.6" cy="12.6" r="9.6"/><circle cx="12.6" cy="12.4" r="4.2"/><path d="M12.6 22.2 V27 M6 27.2 H19.2" stroke-linecap="butt"/></g></svg>
<svg style="left:2735px;top:247px" width="24" height="28" viewBox="0 0 24 28"><g fill="none" stroke="#fff" stroke-width="2.1"><circle cx="11" cy="11.4" r="8.4"/><path d="M11 20 V25 M5.4 25.2 H16.6"/></g><circle cx="11" cy="11" r="5.2" fill="#fff"/><circle cx="10" cy="9.4" r="1.9" fill="#4c4e58"/></svg>
<div class="a" style="left:2794px;top:236px;width:48px;height:48px;border-radius:5px;background:#4c4e58"></div>
<svg style="left:2802px;top:244px" width="32" height="32" viewBox="0 0 32 32"><g fill="none" stroke="#fff" stroke-width="2.9" stroke-linecap="round" stroke-linejoin="round"><path d="M4.6 12.2 A11.2 11.2 0 0 1 26 11.4"/><path d="M28.6 5.6 L26.6 12.6 L19.8 10.4"/><path d="M27.4 19.8 A11.2 11.2 0 0 1 6 20.6"/><path d="M3.4 26.4 L5.4 19.4 L12.2 21.6"/></g></svg>

<div class="a" style="left:2214px;top:309.5px;width:660px;height:938px;background:#000"></div>
<!-- video frame -->
<svg style="left:2333px;top:309.5px" width="422" height="750.5" viewBox="2333 309.5 422 750.5">
<defs>
<linearGradient id="vbg" x1="0" y1="0" x2="0" y2="1"><stop offset="0" stop-color="#ececf8"/><stop offset="1" stop-color="#e3e3ef"/></linearGradient>
<filter id="vb4" x="-30%" y="-30%" width="160%" height="160%"><feGaussianBlur stdDeviation="3.5"/></filter>
<filter id="vb2" x="-30%" y="-30%" width="160%" height="160%"><feGaussianBlur stdDeviation="1.5"/></filter>
<filter id="vb1" x="-30%" y="-30%" width="160%" height="160%"><feGaussianBlur stdDeviation="0.7"/></filter>
<radialGradient id="vsk" cx="2552" cy="640" r="150" gradientUnits="userSpaceOnUse"><stop offset="0" stop-color="#f6dccb"/><stop offset="0.7" stop-color="#efcbb6"/><stop offset="1" stop-color="#e4b49c"/></radialGradient>
<clipPath id="vclip"><rect x="2333" y="309.5" width="422" height="750.5"/></clipPath>
</defs>
<g clip-path="url(#vclip)">
<rect x="2333" y="309.5" width="422" height="750.5" fill="url(#vbg)"/>
<g filter="url(#vb1)">
<!-- neck -->
<path d="M2492 730 C2494 790 2488 820 2440 850 L2540 900 L2650 850 C2616 822 2612 790 2614 730 Z" fill="#e9c1ab"/>
<path d="M2496 760 C2520 800 2585 800 2610 760 L2612 740 L2494 740 Z" fill="#d9a68f" filter="url(#vb4)" opacity="0.8"/>
<!-- shirt -->
<path d="M2320 850 C2360 832 2400 822 2428 810 C2450 860 2500 890 2541 891 C2590 890 2640 856 2654 810 C2690 822 2720 832 2770 852 L2770 1075 L2320 1075 Z" fill="#b0b4cd"/>
<path d="M2428 811 C2450 866 2500 897 2541 898 C2590 897 2640 862 2654 811" fill="none" stroke="#9ea3be" stroke-width="5" opacity="0.8"/>
<path d="M2428 811 C2446 870 2500 906 2541 907 C2594 906 2644 868 2654 811" fill="none" stroke="#bfc3da" stroke-width="4" opacity="0.9"/>
<path d="M2345 1060 C2340 990 2350 950 2362 900" fill="none" stroke="#9da2bd" stroke-width="5" filter="url(#vb2)" opacity="0.7"/>
<path d="M2748 1060 C2752 990 2746 950 2738 900" fill="none" stroke="#9da2bd" stroke-width="5" filter="url(#vb2)" opacity="0.7"/>
<!-- ears -->
<ellipse cx="2441" cy="627" rx="13" ry="37" fill="#eec3ac" transform="rotate(-6 2441 627)"/>
<ellipse cx="2667" cy="627" rx="13" ry="37" fill="#eec3ac" transform="rotate(6 2667 627)"/>
<ellipse cx="2443" cy="630" rx="5" ry="22" fill="#dfa58b" filter="url(#vb2)"/>
<ellipse cx="2665" cy="630" rx="5" ry="22" fill="#dfa58b" filter="url(#vb2)"/>
<!-- hair back -->
<ellipse cx="2557" cy="420" rx="46" ry="21" fill="#3f312b"/>
<path d="M2437 600 C2428 520 2450 440 2552 430 C2654 440 2680 520 2668 600 C2660 560 2640 520 2552 500 C2470 520 2446 560 2437 600 Z" fill="#42342e"/>
<!-- face -->
<path d="M2450 590 C2448 540 2480 498 2552 496 C2626 498 2660 540 2658 590 C2660 650 2650 690 2624 730 C2600 756 2574 767 2552 767 C2530 767 2506 756 2482 730 C2458 690 2448 650 2450 590 Z" fill="url(#vsk)"/>
<!-- hair front -->
<path d="M2438 606 C2424 520 2452 436 2552 428 C2652 436 2682 520 2668 606 C2662 590 2652 584 2646 580 C2642 560 2636 540 2617 512 C2596 498 2575 500 2557 498 C2536 500 2518 500 2498 512 C2480 530 2472 548 2466 570 C2460 584 2446 590 2438 606 Z" fill="#43352f"/>
<path d="M2470 470 C2500 446 2600 446 2636 470" fill="none" stroke="#5a453c" stroke-width="10" filter="url(#vb4)" opacity="0.7"/>
<ellipse cx="2556" cy="414" rx="30" ry="9" fill="#54433b" filter="url(#vb2)"/>
</g>
<!-- features -->
<g filter="url(#vb1)">
<path d="M2470 589 C2490 579 2518 579 2536 585" fill="none" stroke="#93705f" stroke-width="4" stroke-linecap="round" opacity="0.85"/>
<path d="M2570 585 C2588 579 2612 579 2628 588" fill="none" stroke="#93705f" stroke-width="4" stroke-linecap="round" opacity="0.85"/>
<ellipse cx="2505.5" cy="611.5" rx="15" ry="6.4" fill="#f1e4de"/><ellipse cx="2591.5" cy="610.5" rx="15" ry="6.4" fill="#f1e4de"/>
<circle cx="2506" cy="611" r="7.4" fill="#3a2721"/><circle cx="2591.5" cy="610" r="7.4" fill="#3a2721"/>
<path d="M2489 611 C2497 602 2514 602 2522 611" fill="none" stroke="#4a342c" stroke-width="2.2" stroke-linecap="round"/>
<path d="M2575 610 C2583 601 2600 601 2608 610" fill="none" stroke="#4a342c" stroke-width="2.2" stroke-linecap="round"/>
<path d="M2530 668 C2536 680 2546 676 2551 678 C2556 676 2566 680 2572 668" fill="none" stroke="#d29e88" stroke-width="3.2" filter="url(#vb2)"/><path d="M2551 610 V668" stroke="#f8e4d8" stroke-width="7" filter="url(#vb4)" fill="none"/>
<path d="M2515 701 C2532 710 2570 710 2586 700 C2572 720 2532 720 2515 701 Z" fill="#d2706b"/>
<path d="M2515 701 C2530 697 2544 698 2551 701 C2558 698 2572 697 2586 700 C2570 708 2532 708 2515 701 Z" fill="#c45e5b"/>
</g>
<ellipse cx="2480" cy="670" rx="22" ry="16" fill="#f2bfae" opacity="0.5" filter="url(#vb4)"/>
<ellipse cx="2622" cy="670" rx="22" ry="16" fill="#f2bfae" opacity="0.5" filter="url(#vb4)"/>
</g>
</svg>
<!-- transport -->
<svg style="left:2241px;top:1083px" width="22" height="27" viewBox="0 0 22 27"><path d="M1.6 1.6 L20 13.4 L1.6 25.2 Z" fill="#fff" stroke="#fff" stroke-width="2.4" stroke-linejoin="round"/></svg>
<div class="t" style="left:2286px;top:1082px;font-size:25.8px;line-height:30px;color:#9a9bab">00:00.00</div>
<div class="a" style="left:2400px;top:1090.5px;width:343px;height:11.4px;border-radius:6px;background:#333334"></div>
<div class="a" style="left:2397px;top:1084.3px;width:24px;height:24px;border-radius:50%;background:#fff"></div>
<div class="t" style="left:2753.5px;top:1082px;font-size:25.8px;line-height:30px;color:#9a9bab">01:00.00</div>
<div class="a" style="left:2390px;top:1160.3px;width:144px;height:47.4px;border-radius:4px;background:#2e2e2f"></div>
<div class="t" style="left:2390px;top:1169.5px;width:144px;text-align:center;font-size:25px;letter-spacing:0.2px;line-height:30px;color:#fff">Screenshot</div>
<div class="a" style="left:2554px;top:1160.3px;width:144px;height:47.4px;border-radius:4px;background:#0a7aff"></div>
<div class="t" style="left:2554px;top:1169.5px;width:144px;text-align:center;font-size:25px;letter-spacing:0.2px;line-height:30px;color:#fff">Export video</div>
<!-- material info -->
<div class="t" style="left:2248.5px;top:1288px;font-size:28.4px;letter-spacing:0.45px;line-height:34px;color:#fff">Material info</div>
<div class="t" style="left:2248.5px;top:1341px;font-size:24.2px;letter-spacing:0.6px;line-height:30px;color:#8a8b9b">素材1：female-single-video-fa…</div>
<div class="t" style="left:2744px;top:1341px;font-size:24.2px;letter-spacing:0.2px;line-height:30px;color:#8a8b9b">601.61 KB</div>
</div>
</body>
</html>
